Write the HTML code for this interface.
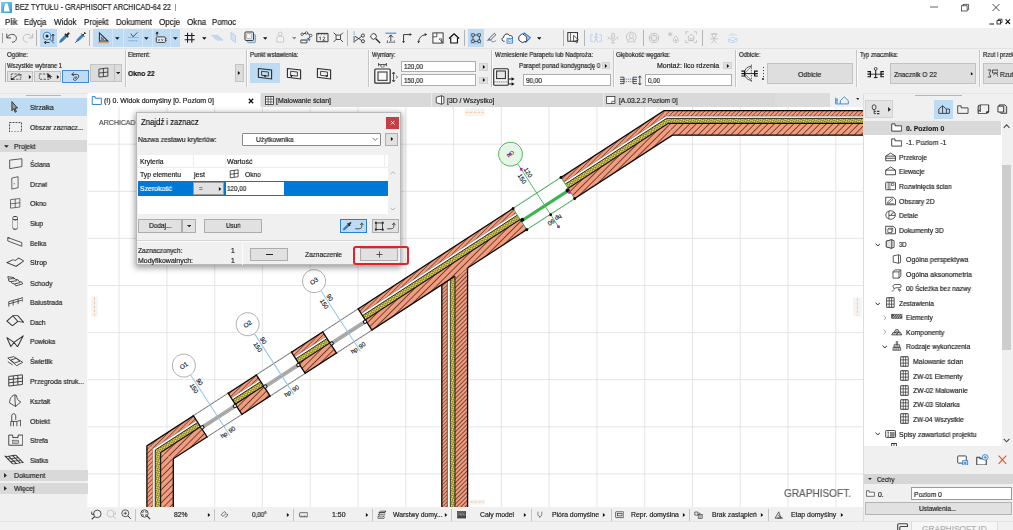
<!DOCTYPE html>
<html><head><meta charset="utf-8"><title>ARCHICAD</title>
<style>
html,body{margin:0;padding:0;}
body{-webkit-font-smoothing:antialiased;width:1013px;height:530px;overflow:hidden;position:relative;background:#f0f0f0;font-family:"Liberation Sans",sans-serif;}
.r{position:absolute;display:block;}
.t{-webkit-text-stroke:0.18px currentColor;will-change:transform;position:absolute;white-space:nowrap;transform-origin:0 50%;font-family:"Liberation Sans",sans-serif;}
</style></head><body>
<div class="r " style="left:0.0px;top:0.0px;width:1013.0px;height:27.5px;background:#ffffff;"></div>
<svg class="r" style="left:1.0px;top:1.5px;" width="11" height="11" viewBox="0 0 11 11"><defs><linearGradient id="ai" x1="0" y1="0" x2="1" y2="1"><stop offset="0" stop-color="#7fd0f2"/><stop offset="1" stop-color="#2a9bd8"/></linearGradient></defs><rect x="0" y="0" width="11" height="11" fill="url(#ai)"/><path d="M3.6 1.6 L6.6 1.6 L8.8 9.6 L2.4 9.6 Z" fill="#fff"/><path d="M3.6 1.6 L2.4 9.6 L1.8 9.6 L3.2 1.6Z" fill="#1c78b8"/></svg>
<div class="t" style="left:14.5px;top:3.32px;font-size:8.13px;line-height:9.76px;color:#1a1a1a;transform:scaleX(0.882);">BEZ TYTUŁU - GRAPHISOFT ARCHICAD-64 22</div>
<div class="r " style="left:174.5px;top:4.0px;width:0.6px;height:7.0px;background:#999;"></div>
<svg class="r" style="left:929.0px;top:3.0px;" width="10" height="8" viewBox="0 0 10 8"><path d="M1 4 H9" stroke="#222" stroke-width="0.7"/></svg>
<svg class="r" style="left:960.0px;top:2.5px;" width="10" height="9" viewBox="0 0 10 9"><rect x="1.5" y="2.8" width="5.6" height="5.2" fill="#fff" stroke="#222" stroke-width="0.7"/><path d="M3 2.8 V1.4 H8.6 V6.8 H7.2" fill="none" stroke="#222" stroke-width="0.7"/></svg>
<svg class="r" style="left:991.0px;top:2.5px;" width="10" height="9" viewBox="0 0 10 9"><path d="M1.5 1 L8.5 8 M8.5 1 L1.5 8" stroke="#222" stroke-width="0.8"/></svg>
<svg class="r" style="left:989.0px;top:17.5px;" width="24" height="8" viewBox="0 0 24 8"><path d="M0.5 6 H5" stroke="#111" stroke-width="1"/><rect x="8" y="2.6" width="3.6" height="3.4" fill="none" stroke="#111" stroke-width="0.8"/><path d="M9.4 2.6 V1.2 H13 V4.6 H11.6" fill="none" stroke="#111" stroke-width="0.8"/><path d="M16.6 1.4 L21 6 M21 1.4 L16.6 6" stroke="#111" stroke-width="1.1"/></svg>
<div class="t" style="left:4.5px;top:17.82px;font-size:8.13px;line-height:9.76px;color:#1a1a1a;transform:scaleX(0.954);">Plik</div>
<div class="t" style="left:23.5px;top:17.82px;font-size:8.13px;line-height:9.76px;color:#1a1a1a;transform:scaleX(0.922);">Edycja</div>
<div class="t" style="left:53.5px;top:17.82px;font-size:8.13px;line-height:9.76px;color:#1a1a1a;transform:scaleX(0.996);">Widok</div>
<div class="t" style="left:83.5px;top:17.82px;font-size:8.13px;line-height:9.76px;color:#1a1a1a;transform:scaleX(0.968);">Projekt</div>
<div class="t" style="left:115.5px;top:17.82px;font-size:8.13px;line-height:9.76px;color:#1a1a1a;transform:scaleX(0.972);">Dokument</div>
<div class="t" style="left:158.5px;top:17.82px;font-size:8.13px;line-height:9.76px;color:#1a1a1a;transform:scaleX(0.989);">Opcje</div>
<div class="t" style="left:186.5px;top:17.82px;font-size:8.13px;line-height:9.76px;color:#1a1a1a;transform:scaleX(0.978);">Okna</div>
<div class="t" style="left:212.0px;top:17.82px;font-size:8.13px;line-height:9.76px;color:#1a1a1a;transform:scaleX(0.949);">Pomoc</div>
<div class="r " style="left:0.0px;top:27.5px;width:1013.0px;height:65.5px;background:#f0f0f0;"></div>
<div class="r " style="left:2.1px;top:32.5px;width:0.8px;height:10.5px;background:#a0a0a0;"></div>
<svg class="r" style="left:4.5px;top:30.9px;" width="13.5" height="13.5" viewBox="0 0 16 16"><path d="M2.2 3.2 V8.2 H7.2" fill="none" stroke="#3a3a3a" stroke-width="1.05"/><path d="M2.6 7.8 C4.5 3.2 11 2.6 13 6.6 C14.6 10 12 13.6 8.4 13.2" fill="none" stroke="#3a3a3a" stroke-width="1.05"/></svg>
<svg class="r" style="left:20.5px;top:30.9px;" width="13.5" height="13.5" viewBox="0 0 16 16"><path d="M13.8 3.2 V8.2 H8.8" fill="none" stroke="#b9b9b9" stroke-width="1.05"/><path d="M13.4 7.8 C11.5 3.2 5 2.6 3 6.6 C1.4 10 4 13.6 7.6 13.2" fill="none" stroke="#b9b9b9" stroke-width="1.05"/></svg>
<div class="r " style="left:35.8px;top:30.0px;width:0.8px;height:16.0px;background:#b4b4b4;"></div>
<div class="r " style="left:40.3px;top:28.6px;width:16.6px;height:18.2px;background:#bedbf4;"></div>
<svg class="r" style="left:42.0px;top:30.9px;" width="13.5" height="13.5" viewBox="0 0 16 16"><circle cx="6" cy="6" r="4.6" fill="#dbe9f8" stroke="#2f7fd1" stroke-width="1.1"/><circle cx="6" cy="6" r="1.9" fill="#2b2b2b"/><path d="M9 9.5 L14 14.5" stroke="#2f7fd1" stroke-width="1.2"/><path d="M13 12 V4 M11.4 5.8 L13 3.6 L14.6 5.8" fill="none" stroke="#2b2b2b" stroke-width="1.1"/><path d="M9 13.6 H3 M4.8 12 L2.6 13.6 L4.8 15.2" fill="none" stroke="#2b2b2b" stroke-width="1.1"/></svg>
<svg class="r" style="left:58.0px;top:31.1px;" width="13.0" height="13.0" viewBox="0 0 16 16"><path d="M2 14 L3 11 L9.5 4.5 L11.5 6.5 L5 13 Z" fill="#2f7fd1" stroke="#1d5ea8" stroke-width="0.8"/><path d="M8.4 3.4 L12.6 7.6" stroke="#2b2b2b" stroke-width="1.6"/><path d="M10.5 5.5 L13 3" stroke="#2b2b2b" stroke-width="2.6" stroke-linecap="round"/></svg>
<svg class="r" style="left:74.0px;top:31.1px;" width="13.0" height="13.0" viewBox="0 0 16 16"><path d="M1.5 14.5 L4 12" stroke="#2b2b2b" stroke-width="1"/><path d="M3.4 12.6 L4.2 10 L10 4.2 L11.8 6 L6 11.8 Z" fill="#2f7fd1" stroke="#1d5ea8" stroke-width="0.8"/><path d="M9 3.2 L12.8 7 M11 5 L13.6 2.4 M12.4 1.2 L14.8 3.6" stroke="#2b2b2b" stroke-width="1.2"/></svg>
<div class="r " style="left:89.3px;top:30.0px;width:0.8px;height:16.0px;background:#b4b4b4;"></div>
<div class="r " style="left:93.2px;top:28.6px;width:87.0px;height:18.2px;background:#bedbf4;"></div>
<div class="r " style="left:112.3px;top:28.6px;width:0.5px;height:18.2px;background:#d3e6f7;"></div>
<div class="r " style="left:122.7px;top:28.6px;width:0.5px;height:18.2px;background:#d3e6f7;"></div>
<div class="r " style="left:141.9px;top:28.6px;width:0.5px;height:18.2px;background:#d3e6f7;"></div>
<div class="r " style="left:151.8px;top:28.6px;width:0.5px;height:18.2px;background:#d3e6f7;"></div>
<div class="r " style="left:170.4px;top:28.6px;width:0.5px;height:18.2px;background:#d3e6f7;"></div>
<svg class="r" style="left:97.4px;top:31.2px;" width="12.8" height="12.8" viewBox="0 0 16 16"><path d="M3 2.4 V12.6 H13.6 Z" fill="none" stroke="#2b2b2b" stroke-width="1.3"/><path d="M5.4 7.6 V10.4 H8.6 Z" fill="none" stroke="#2b2b2b" stroke-width="0.8"/><path d="M1.4 14.6 H14.6" stroke="#d89a5c" stroke-width="1.4"/></svg>
<svg class="r" style="left:115.1px;top:35.6px;" width="4.6" height="4.6" viewBox="0 0 4.6 4.6"><path d="M0 1.15 L4.60 1.15 L2.30 3.68Z" fill="#111"/></svg>
<svg class="r" style="left:127.0px;top:31.3px;" width="12.6" height="12.6" viewBox="0 0 16 16"><path d="M1 8.2 H15" stroke="#6d8fb8" stroke-width="1" stroke-dasharray="1.6 0.8"/><path d="M2 12.4 H14" stroke="#2f7fd1" stroke-width="0.9" stroke-dasharray="1.4 1"/><path d="M7.4 7.6 L13.2 1.8 M5 3.4 L7.6 7.2" stroke="#2b2b2b" stroke-width="1"/></svg>
<svg class="r" style="left:144.1px;top:35.6px;" width="4.6" height="4.6" viewBox="0 0 4.6 4.6"><path d="M0 1.15 L4.60 1.15 L2.30 3.68Z" fill="#111"/></svg>
<svg class="r" style="left:155.2px;top:31.0px;" width="13.2" height="13.2" viewBox="0 0 16 16"><rect x="1.6" y="7.2" width="11" height="6.6" rx="1" fill="#eef4fb" stroke="#2b2b2b" stroke-width="1.1"/><path d="M3.6 9.6 L4.8 12 L6 9.6 M7.6 9.6 L8.8 12 L10 9.6" fill="none" stroke="#2b2b2b" stroke-width="0.7"/><path d="M2.4 6 V2.2 M1 3.8 L2.4 1.8 L3.8 3.8" fill="none" stroke="#2b2b2b" stroke-width="1"/><rect x="1.6" y="1" width="2.2" height="2.2" fill="#2b2b2b"/><path d="M14 9 v0.8 M14 11.4 v0.8" stroke="#2b2b2b" stroke-width="1"/></svg>
<svg class="r" style="left:173.2px;top:35.6px;" width="4.6" height="4.6" viewBox="0 0 4.6 4.6"><path d="M0 1.15 L4.60 1.15 L2.30 3.68Z" fill="#111"/></svg>
<svg class="r" style="left:184.0px;top:31.9px;" width="11.4" height="11.4" viewBox="0 0 16 16"><path d="M5 1 V15 M11 1 V15 M1 5 H15 M1 11 H15" stroke="#1a1a1a" stroke-width="1.5"/></svg>
<svg class="r" style="left:202.1px;top:35.6px;" width="4.6" height="4.6" viewBox="0 0 4.6 4.6"><path d="M0 1.15 L4.60 1.15 L2.30 3.68Z" fill="#111"/></svg>
<svg class="r" style="left:210.6px;top:31.2px;" width="12.8" height="12.8" viewBox="0 0 16 16"><path d="M1 5.6 L8.6 5.6 L15 11.4 L7.4 11.4 Z" fill="#d5e2f3" stroke="#a9c8ec" stroke-width="0.8"/><path d="M3.6 5.6 L10 11.4 M6.2 5.6 L12.6 11.4 M4 8.4 H11.6" stroke="#a9c8ec" stroke-width="0.6"/></svg>
<svg class="r" style="left:226.6px;top:31.2px;" width="12.8" height="12.8" viewBox="0 0 16 16"><path d="M5 1.6 L10.6 5.6 L10.6 14.4 L5 10.4 Z" fill="#d5e2f3" stroke="#a9c8ec" stroke-width="0.9"/></svg>
<svg class="r" style="left:244.4px;top:31.1px;" width="13.0" height="13.0" viewBox="0 0 16 16"><rect x="4.2" y="4.4" width="10" height="10" rx="1.2" fill="#bcd3ee" stroke="#5c8fcc" stroke-width="0.9"/><rect x="1.2" y="1.2" width="10.4" height="10.4" rx="1.2" fill="#f4f4f4" stroke="#2b2b2b" stroke-width="1.2"/><rect x="3.4" y="3.4" width="6" height="6" fill="none" stroke="#8c8c8c" stroke-width="0.7"/></svg>
<svg class="r" style="left:262.7px;top:35.6px;" width="4.6" height="4.6" viewBox="0 0 4.6 4.6"><path d="M0 1.15 L4.60 1.15 L2.30 3.68Z" fill="#111"/></svg>
<svg class="r" style="left:273.6px;top:31.4px;" width="12.4" height="12.4" viewBox="0 0 16 16"><circle cx="8" cy="3.8" r="2.4" fill="#f3f3f3" stroke="#b9b9b9" stroke-width="0.9"/><path d="M3.6 14.4 V9 Q3.6 6.8 6 6.8 H10 Q12.4 6.8 12.4 9 V14.4 Z" fill="#f3f3f3" stroke="#b9b9b9" stroke-width="0.9"/></svg>
<svg class="r" style="left:291.8px;top:35.7px;" width="4.4" height="4.4" viewBox="0 0 4.4 4.4"><path d="M0 1.10 L4.40 1.10 L2.20 3.52Z" fill="#8a8a8a"/></svg>
<svg class="r" style="left:299.6px;top:31.1px;" width="13.0" height="13.0" viewBox="0 0 16 16"><path d="M2.4 4 L8 2.2 L13.4 5.6 L9.6 10.4" fill="none" stroke="#2b2b2b" stroke-width="1.1"/><circle cx="2.6" cy="4" r="1.5" fill="#fff" stroke="#2b2b2b" stroke-width="0.9"/><circle cx="8" cy="2.4" r="1.5" fill="#fff" stroke="#2b2b2b" stroke-width="0.9"/><circle cx="13.2" cy="5.6" r="1.5" fill="#fff" stroke="#2b2b2b" stroke-width="0.9"/><path d="M8 8.6 L11.6 13 L13 9.4 Z" fill="#2f7fd1"/><path d="M1 11 H8.6 V14.6 H1 Z" fill="#fff" stroke="#2b2b2b" stroke-width="1"/><path d="M3 11 v1.6 M5 11 v1.6 M7 11 v1.6" stroke="#2b2b2b" stroke-width="0.6"/></svg>
<svg class="r" style="left:315.8px;top:31.2px;" width="12.8" height="12.8" viewBox="0 0 16 16"><path d="M1 3 H15 V13.4 H1 Z" fill="#f6f6f6" stroke="#2b2b2b" stroke-width="1.2"/><path d="M3 3 v2.4 M5 3 v1.6 M7 3 v2.4 M9 3 v1.6 M11 3 v2.4 M13 3 v1.6" stroke="#2b2b2b" stroke-width="0.7"/><path d="M4.2 8 L5.4 7.4 V11.6 M8.4 8.2 Q9.8 6.8 11 8 Q11.6 9 8.4 11.6 H11.6" fill="none" stroke="#2b2b2b" stroke-width="0.9"/></svg>
<svg class="r" style="left:333.0px;top:32.3px;" width="10.6" height="10.6" viewBox="0 0 16 16"><rect x="4.6" y="4.6" width="6.8" height="6.8" fill="none" stroke="#2b2b2b" stroke-width="1.2"/><path d="M1 1 L4.6 4.6 M15 1 L11.4 4.6 M1 15 L4.6 11.4 M15 15 L11.4 11.4" stroke="#2b2b2b" stroke-width="1.3"/></svg>
<div class="r " style="left:347.1px;top:30.0px;width:0.8px;height:16.0px;background:#b4b4b4;"></div>
<svg class="r" style="left:353.0px;top:31.3px;" width="12.6" height="12.6" viewBox="0 0 16 16"><path d="M1.4 0.6 V5" stroke="#2f7fd1" stroke-width="1" stroke-dasharray="1.6 1"/><path d="M1.4 6.4 V15" stroke="#2b2b2b" stroke-width="1"/><path d="M2.4 6.6 L11 12 M2.4 13 L11 6.8" stroke="#2b2b2b" stroke-width="1.1"/><circle cx="12.6" cy="5.8" r="2" fill="none" stroke="#2b2b2b" stroke-width="1.1"/><circle cx="12.6" cy="13" r="2" fill="none" stroke="#2b2b2b" stroke-width="1.1"/></svg>
<svg class="r" style="left:369.4px;top:31.5px;" width="12.2" height="12.2" viewBox="0 0 16 16"><path d="M2 5.2 L5.4 2 L8.4 2.8 L10 6.4 L6.2 9.8 L3.4 8.4 Z" fill="#fff" stroke="#2b2b2b" stroke-width="1.2"/><path d="M8.6 8.4 L14.6 14.4" stroke="#2b2b2b" stroke-width="1.8"/></svg>
<svg class="r" style="left:385.2px;top:31.8px;" width="11.6" height="11.6" viewBox="0 0 16 16"><path d="M0.6 1.6 H15.4" stroke="#2f7fd1" stroke-width="1.4"/><path d="M8 13 V4.4 M5 7.4 L8 4 L11 7.4" fill="none" stroke="#2b2b2b" stroke-width="1.2"/><path d="M3.4 15 v-3.6 M6.4 15 v-2 M9.6 15 v-2 M12.6 15 v-3.6 M2 15.2 H14" stroke="#555" stroke-width="1.1"/></svg>
<svg class="r" style="left:400.6px;top:31.6px;" width="12.0" height="12.0" viewBox="0 0 16 16"><path d="M3.4 14 V3.4 H13.4" fill="none" stroke="#2b2b2b" stroke-width="1.2"/><path d="M11.6 1.4 L14.4 3.4 L11.6 5.4 Z" fill="#2b2b2b"/><path d="M1.6 12 L3.4 14.8 L5.2 12 Z" fill="#2b2b2b"/></svg>
<svg class="r" style="left:416.2px;top:31.5px;" width="12.2" height="12.2" viewBox="0 0 16 16"><path d="M3.4 14 C3.4 8 7 4.2 13 3.4" fill="none" stroke="#2b2b2b" stroke-width="1.2"/><path d="M11.4 1.2 L14.6 3.2 L11.6 5.4 Z" fill="#2b2b2b"/><path d="M1.6 12 L3.4 14.8 L5.2 12 Z" fill="#2b2b2b"/></svg>
<svg class="r" style="left:432.2px;top:31.6px;" width="12.0" height="12.0" viewBox="0 0 16 16"><rect x="1.2" y="1.2" width="13.6" height="13.6" fill="#f8f8f8" stroke="#2b2b2b" stroke-width="1.2"/><path d="M1.2 6.4 H6.4 V1.2" fill="none" stroke="#2b2b2b" stroke-width="1"/><path d="M9.4 9.2 H13 V12.8 M13 12.8 L9.4 9.2" fill="none" stroke="#2b2b2b" stroke-width="0.9"/><path d="M11.4 14 L13.2 11.6 L14.6 14Z" fill="#2b2b2b"/></svg>
<svg class="r" style="left:448.0px;top:31.5px;" width="12.2" height="12.2" viewBox="0 0 16 16"><path d="M1.4 8.6 L8 2.4 L14.6 8.6" fill="none" stroke="#111" stroke-width="1.7"/><path d="M3.6 8 V14.4 H12.4 V8" fill="#fff" stroke="#111" stroke-width="1.5"/></svg>
<div class="r " style="left:463.5px;top:30.0px;width:0.8px;height:16.0px;background:#b4b4b4;"></div>
<div class="r " style="left:468.0px;top:28.6px;width:16.2px;height:18.2px;background:#bedbf4;"></div>
<svg class="r" style="left:470.2px;top:31.6px;" width="12.0" height="12.0" viewBox="0 0 16 16"><rect x="4" y="4" width="8.4" height="8.4" fill="none" stroke="#2b2b2b" stroke-width="1.1"/><rect x="2.4" y="2.4" width="3.2" height="3.2" fill="#bedbf4" stroke="#2b2b2b" stroke-width="0.9"/><rect x="10.6" y="2.4" width="3.2" height="3.2" fill="#bedbf4" stroke="#2b2b2b" stroke-width="0.9"/><rect x="2.4" y="10.6" width="3.2" height="3.2" fill="#bedbf4" stroke="#2b2b2b" stroke-width="0.9"/><rect x="10.6" y="10.6" width="3.2" height="3.2" fill="#bedbf4" stroke="#2b2b2b" stroke-width="0.9"/><path d="M1 1 V15 H15" fill="none" stroke="#2f7fd1" stroke-width="0.7" stroke-dasharray="1.4 1"/></svg>
<svg class="r" style="left:486.2px;top:31.8px;" width="11.6" height="11.6" viewBox="0 0 16 16"><path d="M3.6 11.4 L4.4 8.8 L11.6 1.8 L13.6 3.8 L6.4 10.8 Z" fill="#fff" stroke="#2b2b2b" stroke-width="1.1"/><path d="M1 12.4 C3 9 6.6 9.4 7 11.6 C7.4 13.8 11 14.6 14 11.4" fill="none" stroke="#2f7fd1" stroke-width="1.2"/></svg>
<svg class="r" style="left:500.8px;top:31.1px;" width="13.0" height="13.0" viewBox="0 0 16 16"><path d="M4.4 12.6 H3.6 C0.6 12.6 0.4 8.2 3.4 7.8 C3.2 3.6 8.6 2 10.4 5.6 C13.6 5 15 8.2 13.6 10" fill="#fff" stroke="#2b2b2b" stroke-width="1.2"/><rect x="7.4" y="9" width="6.8" height="6" fill="#dbe9f8" stroke="#2f7fd1" stroke-width="1"/><rect x="9.2" y="10.8" width="3.2" height="2.4" fill="#fff" stroke="#2f7fd1" stroke-width="0.6"/></svg>
<svg class="r" style="left:518.0px;top:30.9px;" width="13.4" height="13.4" viewBox="0 0 16 16"><path d="M7.6 2.4 L14.6 8 L9.4 13.4 L2.6 8 Z" fill="#cfe1f5" stroke="#2f7fd1" stroke-width="1.3"/><path d="M1 6.6 L5.2 3.2 L10.4 7 L10.4 12 L5.2 13.8 L1 11 Z" fill="#fff" stroke="#2b2b2b" stroke-width="1.1"/></svg>
<svg class="r" style="left:536.5px;top:35.6px;" width="4.6" height="4.6" viewBox="0 0 4.6 4.6"><path d="M0 1.15 L4.60 1.15 L2.30 3.68Z" fill="#111"/></svg>
<div class="r " style="left:563.1px;top:30.0px;width:0.8px;height:16.0px;background:#b4b4b4;"></div>
<svg class="r" style="left:567.0px;top:31.3px;" width="12.6" height="12.6" viewBox="0 0 16 16"><rect x="1" y="2" width="12.4" height="11" fill="#f8f8f8" stroke="#2b2b2b" stroke-width="1.2"/><path d="M4.4 2 V13" stroke="#2b2b2b" stroke-width="0.9"/><path d="M8.4 5.4 L8.4 14 L10.4 12 L12 15.2 L13.2 14.6 L11.8 11.6 L14.4 11.4 Z" fill="#fff" stroke="#111" stroke-width="0.9"/></svg>
<div class="r " style="left:584.1px;top:30.0px;width:0.8px;height:16.0px;background:#b4b4b4;"></div>
<svg class="r" style="left:590.0px;top:31.5px;" width="12.2" height="12.2" viewBox="0 0 16 16"><path d="M1 3.8 H4 M1 3.8 V12.4 H4 M15 3.8 H12 M15 3.8 V12.4 H12" fill="none" stroke="#a9c8ec" stroke-width="0.9"/><circle cx="8.4" cy="2.6" r="1.4" fill="#a9c8ec"/><path d="M8.2 4.4 L7.8 9 L5.4 14 M7.8 9 L10.8 14 M5.2 7.4 L8 5.6 L11 8" fill="none" stroke="#a9c8ec" stroke-width="1.1"/></svg>
<svg class="r" style="left:607.4px;top:31.6px;" width="12.0" height="12.0" viewBox="0 0 16 16"><rect x="6" y="1.4" width="4" height="8" rx="2" fill="#e4e4e4" stroke="#b9b9b9" stroke-width="0.9"/><path d="M3.8 7.4 C3.8 12.4 12.2 12.4 12.2 7.4 M8 11.4 V14.6 M5.4 14.6 H10.6 M1 6 L2.6 8 L1 10 M15 6 L13.4 8 L15 10" fill="none" stroke="#b9b9b9" stroke-width="0.9"/></svg>
<svg class="r" style="left:625.4px;top:31.3px;" width="12.6" height="12.6" viewBox="0 0 16 16"><circle cx="8" cy="7.6" r="6.2" fill="none" stroke="#b9b9b9" stroke-width="1"/><circle cx="8" cy="6.4" r="2.6" fill="none" stroke="#b9b9b9" stroke-width="0.9"/><path d="M4 12 C5 8.8 11 8.8 12 12 M2.2 13.4 L4.6 14.8 M13.8 13.4 L11.4 14.8" fill="none" stroke="#b9b9b9" stroke-width="0.9"/></svg>
<div class="r " style="left:642.6px;top:30.0px;width:0.8px;height:16.0px;background:#b4b4b4;"></div>
<svg class="r" style="left:648.4px;top:31.6px;" width="12.0" height="12.0" viewBox="0 0 16 16"><circle cx="8" cy="8" r="6.4" fill="#ececec" stroke="#b9b9b9" stroke-width="1"/><path d="M8 1.6 V14.4 M1.6 8 H14.4" stroke="#b9b9b9" stroke-width="0.9"/><rect x="4.8" y="4.8" width="6.4" height="6.4" rx="1.6" fill="#ececec" stroke="#b9b9b9" stroke-width="0.9"/></svg>
<svg class="r" style="left:666.6px;top:31.2px;" width="12.8" height="12.8" viewBox="0 0 16 16"><path d="M4 1 V7 M1 4 H7 M2 2 L6 6 M6 2 L2 6" stroke="#b9b9b9" stroke-width="0.8"/><path d="M11 6 C8.4 8.6 7.6 11 8.4 12.8 C9.4 15 12.6 15 13.6 12.8 C14.4 11 13.6 8.6 11 6 Z" fill="#f4f4f4" stroke="#b9b9b9" stroke-width="1"/><circle cx="11" cy="11.6" r="1.2" fill="#b9b9b9"/></svg>
<svg class="r" style="left:684.8px;top:31.4px;" width="12.4" height="12.4" viewBox="0 0 16 16"><path d="M1 4.4 V1 H4.4 M11.6 1 H15 V4.4 M15 11.6 V15 H11.6 M4.4 15 H1 V11.6" fill="none" stroke="#b9b9b9" stroke-width="1"/><path d="M3.4 8.4 L8 4 L12.6 8.4 M4.8 7.6 V12.6 H11.2 V7.6" fill="none" stroke="#b9b9b9" stroke-width="1"/><rect x="6.8" y="9.4" width="2.4" height="3.2" fill="none" stroke="#b9b9b9" stroke-width="0.7"/></svg>
<div class="r " style="left:702.0px;top:30.0px;width:0.8px;height:16.0px;background:#b4b4b4;"></div>
<svg class="r" style="left:708.0px;top:31.5px;" width="12.2" height="12.2" viewBox="0 0 16 16"><circle cx="8" cy="4.6" r="2.6" fill="none" stroke="#b9b9b9" stroke-width="1"/><path d="M3.4 2.6 H12.6 M8 7.2 V11 M2.6 9 H13.4 M8 11 L4.4 15 M8 11 L11.6 15" fill="none" stroke="#b9b9b9" stroke-width="1"/></svg>
<svg class="r" style="left:726.8px;top:31.8px;" width="11.6" height="11.6" viewBox="0 0 16 16"><path d="M2.4 5 C4 1.4 12 1.4 13.6 5 M4.6 5.4 C5.6 3.4 10.4 3.4 11.4 5.4" fill="none" stroke="#a9c8ec" stroke-width="0.9" stroke-dasharray="1.4 0.9"/><path d="M2 10.4 L7 7.4 L13.8 9.2 L13.8 12.4 L8.6 15 L2 13 Z M2 10.4 L8.6 12.2 L13.8 9.2 M8.6 12.2 V15" fill="#f4f7fb" stroke="#a9c8ec" stroke-width="0.9"/></svg>
<div class="r " style="left:0.0px;top:48.0px;width:1013.0px;height:0.6px;background:#e2e2e2;"></div>
<div class="t" style="left:6.7px;top:50.91px;font-size:6.31px;line-height:7.57px;color:#222;transform:scaleX(0.959);">Ogólne:</div>
<div class="r " style="left:4.7px;top:62.5px;width:0.7px;height:19.0px;background:#a8a8a8;"></div>
<div class="t" style="left:6.7px;top:62.36px;font-size:6.74px;line-height:8.09px;color:#222;transform:scaleX(0.869);">Wszystkie wybrane 1</div>
<div class="r " style="left:7.4px;top:70.8px;width:25.2px;height:11.6px;background:#e3e3e3;border:0.7px solid #c0c0c0;box-sizing:border-box;"></div>
<svg class="r" style="left:10.0px;top:71.8px" width="14.0" height="9.4" viewBox="0 0 16 16" preserveAspectRatio="none"><rect x="1.4" y="3.4" width="11" height="9" fill="none" stroke="#2b2b2b" stroke-width="1" stroke-dasharray="2.4 1.4"/><path d="M3 11 L9 5 H13" fill="none" stroke="#2b2b2b" stroke-width="1.1"/><rect x="1" y="10.4" width="3" height="3.2" fill="#2b2b2b"/></svg>
<svg class="r" style="left:28.0px;top:74.7px;" width="4.0" height="4.0" viewBox="0 0 4.0 4.0"><path d="M0.90 0 L3.20 2.00 L0.90 4.00Z" fill="#111"/></svg>
<div class="r " style="left:34.0px;top:70.8px;width:27.0px;height:11.6px;background:#e3e3e3;border:0.7px solid #c0c0c0;box-sizing:border-box;"></div>
<svg class="r" style="left:38.0px;top:71.8px" width="15.0" height="9.4" viewBox="0 0 16 16" preserveAspectRatio="none"><rect x="1.4" y="3.4" width="10.4" height="9" fill="none" stroke="#2b2b2b" stroke-width="1" stroke-dasharray="2.4 1.4"/><path d="M10 2 L10 10.4 L12 8.6 L13.4 11.6 L14.4 11 L13 8.2 L15.4 8 Z" fill="#2b2b2b"/></svg>
<svg class="r" style="left:55.6px;top:74.7px;" width="4.0" height="4.0" viewBox="0 0 4.0 4.0"><path d="M0.90 0 L3.20 2.00 L0.90 4.00Z" fill="#111"/></svg>
<div class="r " style="left:62.2px;top:70.4px;width:26.6px;height:12.4px;background:#bedbf4;border:0.7px solid #3c8ad8;box-sizing:border-box;"></div>
<svg class="r" style="left:69.6px;top:71.2px" width="12.0" height="11.0" viewBox="0 0 16 16" preserveAspectRatio="none"><path d="M5.4 2.2 L2.2 5 L5.6 7.4" fill="none" stroke="#2b2b2b" stroke-width="1.1"/><path d="M2.6 5 H8.4 C11 5 12.4 6.6 11.4 8.8 L8.6 12.6 C7 14.8 3.8 13.4 5 11 L7.4 8.4 C8 7.6 9.2 8.4 8.6 9.2 L7 11.4" fill="none" stroke="#2b2b2b" stroke-width="1.1"/></svg>
<div class="r " style="left:90.0px;top:63.8px;width:31.7px;height:18.6px;background:#dcdcdc;border:0.7px solid #c4c4c4;box-sizing:border-box;"></div>
<div class="r " style="left:114.2px;top:64.4px;width:0.6px;height:17.4px;background:#c2c2c2;"></div>
<svg class="r" style="left:97.8px;top:67.4px" width="10.8" height="11.0" viewBox="0 0 16 16" preserveAspectRatio="none"><path d="M1.4 3 L14.6 1.4 V13.4 L1.4 14.6 Z M8 2.2 V14 M1.4 8.8 L14.6 7.4" fill="none" stroke="#2b2b2b" stroke-width="1.2"/></svg>
<svg class="r" style="left:115.9px;top:71.3px;" width="4.2" height="4.2" viewBox="0 0 4.2 4.2"><path d="M0 1.05 L4.20 1.05 L2.10 3.36Z" fill="#222"/></svg>
<div class="r " style="left:125.0px;top:49.5px;width:0.8px;height:37.5px;background:#c6c6c6;"></div>
<div class="r " style="left:125.8px;top:49.5px;width:0.6px;height:37.5px;background:#fbfbfb;"></div>
<div class="t" style="left:128.3px;top:50.91px;font-size:6.31px;line-height:7.57px;color:#222;transform:scaleX(0.892);">Element:</div>
<div class="t" style="left:128.3px;top:69.38px;font-size:7.7px;line-height:9.24px;color:#111;font-weight:bold;transform:scaleX(0.879);">Okno 22</div>
<div class="r " style="left:234.5px;top:63.8px;width:9.3px;height:18.6px;background:#dcdcdc;border:0.7px solid #c4c4c4;box-sizing:border-box;"></div>
<svg class="r" style="left:237.4px;top:71.2px;" width="4.0" height="4.0" viewBox="0 0 4.0 4.0"><path d="M0.90 0 L3.20 2.00 L0.90 4.00Z" fill="#111"/></svg>
<div class="r " style="left:246.4px;top:49.5px;width:0.8px;height:37.5px;background:#c6c6c6;"></div>
<div class="r " style="left:247.2px;top:49.5px;width:0.6px;height:37.5px;background:#fbfbfb;"></div>
<div class="t" style="left:250.4px;top:50.91px;font-size:6.31px;line-height:7.57px;color:#222;transform:scaleX(0.958);">Punkt wstawienia:</div>
<div class="r " style="left:250.4px;top:63.0px;width:29.2px;height:19.8px;background:#bedbf4;"></div>
<svg class="r" style="left:257.2px;top:66.6px" width="16.0" height="13.0" viewBox="0 0 16 14" preserveAspectRatio="none"><path d="M1.4 1.6 L14.6 3.2 V12.8 L1.4 11 Z" fill="none" stroke="#2b2b2b" stroke-width="1.1"/><path d="M4.6 4.6 L11.4 5.4 V9.8 L4.6 9 Z" fill="none" stroke="#2b2b2b" stroke-width="0.9"/><path d="M6.6 9 L8 11.4 L9.4 9.2 Z" fill="#111"/></svg>
<svg class="r" style="left:286.4px;top:66.6px" width="16.0" height="13.0" viewBox="0 0 16 14" preserveAspectRatio="none"><path d="M1.4 1.6 L14.6 3.2 V12.8 L1.4 11 Z" fill="none" stroke="#2b2b2b" stroke-width="1.1"/><path d="M4.6 4.6 L11.4 5.4 V9.8 L4.6 9 Z" fill="none" stroke="#2b2b2b" stroke-width="0.9"/><path d="M4.0 9 L5.4 11.4 L6.800000000000001 9.2 Z" fill="#111"/></svg>
<svg class="r" style="left:315.5px;top:66.6px" width="16.0" height="13.0" viewBox="0 0 16 14" preserveAspectRatio="none"><path d="M1.4 1.6 L14.6 3.2 V12.8 L1.4 11 Z" fill="none" stroke="#2b2b2b" stroke-width="1.1"/><path d="M4.6 4.6 L11.4 5.4 V9.8 L4.6 9 Z" fill="none" stroke="#2b2b2b" stroke-width="0.9"/><path d="M9.4 9 L10.8 11.4 L12.200000000000001 9.2 Z" fill="#111"/></svg>
<div class="r " style="left:368.1px;top:49.5px;width:0.8px;height:37.5px;background:#c6c6c6;"></div>
<div class="r " style="left:368.9px;top:49.5px;width:0.6px;height:37.5px;background:#fbfbfb;"></div>
<div class="t" style="left:372.2px;top:50.91px;font-size:6.31px;line-height:7.57px;color:#222;transform:scaleX(0.892);">Wymiary:</div>
<svg class="r" style="left:373.8px;top:62.2px" width="24.4" height="22.0" viewBox="0 0 24.4 22" preserveAspectRatio="none"><path d="M4.6 2.6 H12.4 M4.6 1 V4.2 M12.4 1 V4.2" stroke="#2b2b2b" stroke-width="0.8"/><ellipse cx="8.5" cy="3.9" rx="2" ry="1.2" fill="#fff" stroke="#2b2b2b" stroke-width="0.6"/><rect x="0.8" y="7" width="15.4" height="14.2" rx="1" fill="#f7f7f7" stroke="#2b2b2b" stroke-width="1.2"/><rect x="4" y="10" width="9" height="8.4" fill="#fafafa" stroke="#555" stroke-width="1.3"/><path d="M19.6 10.4 V19.6 M18.2 12 L19.6 10 L21 12 M18.2 18 L19.6 20 L21 18" fill="none" stroke="#2b2b2b" stroke-width="0.8"/><path d="M22 13.6 l1.6 1.4 l-1.6 1.4" fill="none" stroke="#2b2b2b" stroke-width="0.7"/></svg>
<div class="r " style="left:401.0px;top:60.6px;width:74.9px;height:11.6px;background:#fff;border:0.8px solid #adadad;box-sizing:border-box;"></div>
<div class="r " style="left:401.0px;top:74.2px;width:74.9px;height:11.6px;background:#fff;border:0.8px solid #adadad;box-sizing:border-box;"></div>
<div class="t" style="left:404.3px;top:63.29px;font-size:6.85px;line-height:8.22px;color:#222;transform:scaleX(0.907);">120,00</div>
<div class="t" style="left:404.3px;top:76.79px;font-size:6.85px;line-height:8.22px;color:#222;transform:scaleX(0.907);">150,00</div>
<div class="r " style="left:479.0px;top:63.0px;width:9.2px;height:7.5px;background:#e0e0e0;border:0.7px solid #d2d2d2;box-sizing:border-box;"></div>
<svg class="r" style="left:481.8px;top:64.8px;" width="4.0" height="4.0" viewBox="0 0 4.0 4.0"><path d="M0.90 0 L3.20 2.00 L0.90 4.00Z" fill="#111"/></svg>
<div class="r " style="left:479.0px;top:76.6px;width:9.2px;height:7.4px;background:#e0e0e0;border:0.7px solid #d2d2d2;box-sizing:border-box;"></div>
<svg class="r" style="left:481.8px;top:78.3px;" width="4.0" height="4.0" viewBox="0 0 4.0 4.0"><path d="M0.90 0 L3.20 2.00 L0.90 4.00Z" fill="#111"/></svg>
<div class="r " style="left:491.2px;top:49.5px;width:0.8px;height:37.5px;background:#c6c6c6;"></div>
<div class="r " style="left:492.0px;top:49.5px;width:0.6px;height:37.5px;background:#fbfbfb;"></div>
<div class="t" style="left:494.7px;top:50.91px;font-size:6.31px;line-height:7.57px;color:#222;transform:scaleX(0.959);">Wzniesienie Parapetu lub Nadproża:</div>
<div class="t" style="left:518.9px;top:61.82px;font-size:6.63px;line-height:7.96px;color:#222;transform:scaleX(0.924);">Parapet ponad kondygnację 0</div>
<div class="r " style="left:601.6px;top:61.8px;width:8.1px;height:7.4px;background:#e0e0e0;border:0.7px solid #d2d2d2;box-sizing:border-box;"></div>
<svg class="r" style="left:603.9px;top:63.5px;" width="4.0" height="4.0" viewBox="0 0 4.0 4.0"><path d="M0.90 0 L3.20 2.00 L0.90 4.00Z" fill="#111"/></svg>
<svg class="r" style="left:493.4px;top:68.0px" width="22.0" height="18.4" viewBox="0 0 22 18.4" preserveAspectRatio="none"><rect x="0.7" y="0.7" width="14.6" height="16.6" rx="1" fill="#f5f5f5" stroke="#2b2b2b" stroke-width="1.1"/><rect x="3.6" y="3" width="8.8" height="7.6" fill="#e6e6e6" stroke="#2b2b2b" stroke-width="1"/><path d="M0.7 14 H15.3" stroke="#2b2b2b" stroke-width="0.7" stroke-dasharray="1 0.8"/><path d="M15.6 11 H19.4 M15.6 16 H19.4" stroke="#111" stroke-width="0.9"/><path d="M18.6 9.2 L21.6 11 L18.6 12.8 Z M18.6 14.2 L21.6 16 L18.6 17.8 Z" fill="#111"/></svg>
<div class="r " style="left:523.3px;top:74.2px;width:87.4px;height:11.6px;background:#fff;border:0.8px solid #adadad;box-sizing:border-box;"></div>
<div class="t" style="left:526.3px;top:76.79px;font-size:6.85px;line-height:8.22px;color:#222;transform:scaleX(0.933);">90,00</div>
<div class="r " style="left:613.0px;top:49.5px;width:0.8px;height:37.5px;background:#c6c6c6;"></div>
<div class="r " style="left:613.8px;top:49.5px;width:0.6px;height:37.5px;background:#fbfbfb;"></div>
<div class="t" style="left:616.4px;top:50.91px;font-size:6.31px;line-height:7.57px;color:#222;transform:scaleX(0.950);">Głębokość węgarka:</div>
<div class="t" style="left:656.6px;top:61.76px;font-size:6.74px;line-height:8.09px;color:#222;transform:scaleX(1.039);">Montaż: lico rdzenia</div>
<div class="r " style="left:723.0px;top:61.8px;width:8.7px;height:7.4px;background:#e0e0e0;border:0.7px solid #d2d2d2;box-sizing:border-box;"></div>
<svg class="r" style="left:725.6px;top:63.5px;" width="4.0" height="4.0" viewBox="0 0 4.0 4.0"><path d="M0.90 0 L3.20 2.00 L0.90 4.00Z" fill="#111"/></svg>
<svg class="r" style="left:618.8px;top:74.6px" width="23.6" height="10.8" viewBox="0 0 23.6 10.8" preserveAspectRatio="none"><path d="M1 2.2 H5 V8.6 H1 M1 4.4 H5 M1 6.4 H5 M18 2.2 H14 V8.6 H18 M14 4.4 H18 M14 6.4 H18" fill="none" stroke="#2b2b2b" stroke-width="0.8"/><path d="M5 4.2 H14 M5 6.6 H14" stroke="#4d6f9c" stroke-width="0.8" stroke-dasharray="1.2 0.8"/><path d="M20.8 1 V10 M19.4 2.6 L20.8 0.8 L22.2 2.6 M19.4 8.2 L20.8 10 L22.2 8.2" fill="none" stroke="#2b2b2b" stroke-width="0.8"/></svg>
<div class="r " style="left:645.3px;top:74.2px;width:87.1px;height:11.6px;background:#fff;border:0.8px solid #adadad;box-sizing:border-box;"></div>
<div class="t" style="left:648.0px;top:76.79px;font-size:6.85px;line-height:8.22px;color:#222;transform:scaleX(0.900);">0,00</div>
<div class="r " style="left:735.3px;top:49.5px;width:0.8px;height:37.5px;background:#c6c6c6;"></div>
<div class="r " style="left:736.1px;top:49.5px;width:0.6px;height:37.5px;background:#fbfbfb;"></div>
<div class="t" style="left:738.5px;top:50.91px;font-size:6.31px;line-height:7.57px;color:#222;transform:scaleX(0.929);">Odbicie:</div>
<svg class="r" style="left:741.2px;top:64.0px" width="17.4" height="18.4" viewBox="0 0 17.4 18.4" preserveAspectRatio="none"><path d="M10.4 0.6 V17.8" stroke="#2b2b2b" stroke-width="0.7" stroke-dasharray="1.6 1"/><path d="M10.4 2.2 C5.4 2.6 3.2 6.4 3.4 9.6 C3.6 13 6.4 16 10.4 16.4" fill="none" stroke="#2b2b2b" stroke-width="0.8"/><path d="M3.6 9.6 L10.4 2.4 M3.6 9.6 L10.4 16.2" stroke="#2b2b2b" stroke-width="0.5"/><path d="M0.4 7.2 H3.6 V12 H0.4 M0.4 9.6 H3.6 M16.8 7.2 H13.6 V12 H16.8 M13.6 9.6 H16.8" fill="none" stroke="#111" stroke-width="1.15"/><path d="M3.6 9.6 H13.6" stroke="#111" stroke-width="0.9"/></svg>
<div class="r " style="left:762.5px;top:67.0px;width:0.9px;height:1.2px;background:#333;"></div>
<div class="r " style="left:762.5px;top:70.0px;width:0.9px;height:1.2px;background:#333;"></div>
<div class="r " style="left:762.5px;top:73.0px;width:0.9px;height:1.2px;background:#333;"></div>
<div class="r " style="left:762.5px;top:76.0px;width:0.9px;height:1.2px;background:#333;"></div>
<div class="r" style="left:761.9px;top:78.2px;width:2.2px;height:2.2px;border-radius:50%;background:#222"></div>
<div class="r " style="left:766.7px;top:63.0px;width:86.0px;height:20.8px;background:#dedede;border:0.7px solid #c2c2c2;box-sizing:border-box;"></div>
<div class="t" style="left:798.0px;top:70.60px;font-size:7.17px;line-height:8.60px;color:#222;transform:scaleX(0.963);">Odbicie</div>
<div class="r " style="left:856.1px;top:49.5px;width:0.8px;height:37.5px;background:#c6c6c6;"></div>
<div class="r " style="left:856.9px;top:49.5px;width:0.6px;height:37.5px;background:#fbfbfb;"></div>
<div class="t" style="left:860.1px;top:50.91px;font-size:6.31px;line-height:7.57px;color:#222;transform:scaleX(0.908);">Typ znacznika:</div>
<svg class="r" style="left:866.6px;top:67.2px" width="17.4" height="11.8" viewBox="0 0 17.4 11.8" preserveAspectRatio="none"><circle cx="8.7" cy="1.9" r="1.4" fill="#fff" stroke="#111" stroke-width="0.8"/><path d="M8.7 3.4 V10.4 M6.9 10.6 H10.5" stroke="#111" stroke-width="1"/><path d="M0.5 4.6 H3.4 V9.8 H0.5 M0.5 7.2 H3.4 M16.9 4.6 H14 V9.8 H16.9 M14 7.2 H16.9" fill="none" stroke="#111" stroke-width="1.15"/><path d="M3.4 7.2 H14" stroke="#111" stroke-width="0.8"/></svg>
<div class="r " style="left:890.0px;top:63.0px;width:86.2px;height:20.8px;background:#dedede;border:0.7px solid #c2c2c2;box-sizing:border-box;"></div>
<div class="t" style="left:893.9px;top:70.60px;font-size:7.17px;line-height:8.60px;color:#222;transform:scaleX(0.926);">Znacznik O 22</div>
<svg class="r" style="left:970.1px;top:71.7px;" width="3.8" height="3.8" viewBox="0 0 3.8 3.8"><path d="M0.85 0 L3.04 1.90 L0.85 3.80Z" fill="#111"/></svg>
<div class="r " style="left:979.4px;top:49.5px;width:0.8px;height:37.5px;background:#c6c6c6;"></div>
<div class="r " style="left:980.2px;top:49.5px;width:0.6px;height:37.5px;background:#fbfbfb;"></div>
<div class="t" style="left:982.6px;top:50.91px;font-size:6.31px;line-height:7.57px;color:#222;transform:scaleX(0.951);">Rzut i przekrój:</div>
<div class="r " style="left:983.0px;top:63.0px;width:37.0px;height:20.8px;background:#dedede;border:0.7px solid #c2c2c2;box-sizing:border-box;"></div>
<svg class="r" style="left:986.7px;top:69.0px" width="11.8" height="9.0" viewBox="0 0 15 9" preserveAspectRatio="none"><path d="M1 1 H5 L3 4.4 L5 8 H1 M7 1 H14 V4 H7 Z M8 6 L11 4 L14 6 V8" fill="none" stroke="#2b2b2b" stroke-width="0.9"/></svg>
<div class="t" style="left:1000.3px;top:70.60px;font-size:7.17px;line-height:8.60px;color:#222;transform:scaleX(0.909);">Rzut</div>
<div class="r " style="left:0.0px;top:92.6px;width:1013.0px;height:1.0px;background:#e6e6e6;"></div>
<div class="r " style="left:87.6px;top:93.4px;width:776.4px;height:13.6px;background:#d9d9d9;"></div>
<div class="r " style="left:88.0px;top:93.4px;width:172.0px;height:13.8px;background:#ffffff;"></div>
<div class="r " style="left:259.7px;top:93.4px;width:0.7px;height:13.6px;background:#ececec;"></div>
<div class="r " style="left:431.2px;top:93.4px;width:0.7px;height:13.6px;background:#ececec;"></div>
<div class="r " style="left:602.7px;top:93.4px;width:0.7px;height:13.6px;background:#ececec;"></div>
<div class="r " style="left:774.7px;top:93.4px;width:0.7px;height:13.6px;background:#ececec;"></div>
<div class="r " style="left:775.3px;top:93.4px;width:55.0px;height:13.6px;background:#dcdcdc;"></div>
<div class="r " style="left:830.0px;top:93.4px;width:34.0px;height:13.6px;background:#f0f0f0;"></div>
<svg class="r" style="left:90.6px;top:94.6px" width="11.6" height="10.4" viewBox="0 0 16 16"><path d="M1 2.4 H5.4 V5 H15 V14.6 H1 Z" fill="#fff" stroke="#2f7fd1" stroke-width="1.5"/></svg>
<div class="t" style="left:104.0px;top:97.36px;font-size:6.74px;line-height:8.09px;color:#222;transform:scaleX(1.038);">(!) 0. Widok domyślny [0. Poziom 0]</div>
<svg class="r" style="left:248.4px;top:97.6px" width="6.0" height="6.0" viewBox="0 0 10 10"><path d="M1.4 1.4 L8.6 8.6 M8.6 1.4 L1.4 8.6" stroke="#111" stroke-width="2.2"/></svg>
<svg class="r" style="left:264.6px;top:95.6px" width="9.0" height="9.0" viewBox="0 0 16 16"><rect x="1" y="1" width="14" height="14" fill="#fff" stroke="#2b2b2b" stroke-width="1.4"/><path d="M1 5.6 H15 M1 10.4 H15 M5.6 1 V15 M10.4 1 V15" stroke="#2b2b2b" stroke-width="1.1"/></svg>
<div class="t" style="left:275.5px;top:97.36px;font-size:6.74px;line-height:8.09px;color:#222;transform:scaleX(1.027);">[Malowanie ścian]</div>
<svg class="r" style="left:435.2px;top:95.2px" width="10.0" height="10.0" viewBox="0 0 16 16"><path d="M2 3.6 L10.4 1.2 L14.2 2.6 V13 L10.4 14.8 L2 12.4 Z M10.4 1.2 V14.8" fill="#fff" stroke="#2b2b2b" stroke-width="1.3"/></svg>
<div class="t" style="left:447.0px;top:97.36px;font-size:6.74px;line-height:8.09px;color:#222;transform:scaleX(1.015);">[3D / Wszystko]</div>
<svg class="r" style="left:606.4px;top:96.2px" width="9.6" height="8.0" viewBox="0 0 16 13.6"><rect x="1" y="1" width="14" height="11.6" fill="#fff" stroke="#2b2b2b" stroke-width="1.3"/><path d="M9.6 12.6 V9 H15" fill="none" stroke="#2b2b2b" stroke-width="1.1"/></svg>
<div class="t" style="left:618.5px;top:97.36px;font-size:6.74px;line-height:8.09px;color:#222;transform:scaleX(0.995);">[A.03.2.2 Poziom 0]</div>
<svg class="r" style="left:833.4px;top:95.4px" width="18.0" height="10.0" viewBox="0 0 18.4 13"><path d="M1 3.4 V11.6 H17.4 V7.4 L12.2 2.4 L7 7.4 V11.6 M1 5.4 H4 M1 7.4 H4 M1 9.4 H4" fill="none" stroke="#3a86d6" stroke-width="1.2"/></svg>
<svg class="r" style="left:855.7px;top:97.1px;" width="3.8" height="3.8" viewBox="0 0 3.8 3.8"><path d="M0 0.95 L3.80 0.95 L1.90 3.04Z" fill="#333"/></svg>
<div class="r " style="left:0.0px;top:93.6px;width:87.4px;height:437.0px;background:#f0f0f0;"></div>
<div class="r " style="left:87.4px;top:93.6px;width:0.8px;height:414.0px;background:#fafafa;"></div>
<div class="r " style="left:26.0px;top:95.1px;width:35.0px;height:0.8px;background:#b5b5b5;"></div>
<div class="r " style="left:0.0px;top:98.1px;width:87.2px;height:18.2px;background:#bedbf4;"></div>
<svg class="r" style="left:11.3px;top:101.0px" width="7.3" height="12.0" viewBox="0 0 11.6 16" preserveAspectRatio="none"><path d="M1.4 0.8 V13 L4.4 10.2 L6.6 15 L8.6 14 L6.4 9.6 L10.4 9.4 Z" fill="#9a9a9a" stroke="#222" stroke-width="1.2" stroke-linejoin="round"/></svg>
<div class="t" style="left:29.9px;top:104.30px;font-size:7.17px;line-height:8.60px;color:#222;transform:scaleX(0.923);">Strzałka</div>
<svg class="r" style="left:8.9px;top:121.8px" width="13.0" height="10.6" viewBox="0 0 20 16" preserveAspectRatio="none"><rect x="0.8" y="0.8" width="18.4" height="14.4" fill="none" stroke="#333333" stroke-width="1.3" stroke-dasharray="3 1.6"/></svg>
<div class="t" style="left:29.9px;top:124.20px;font-size:7.17px;line-height:8.60px;color:#222;transform:scaleX(0.931);">Obszar zaznacz...</div>
<div class="r " style="left:0.0px;top:140.0px;width:87.4px;height:12.0px;background:#d9d9d9;"></div>
<svg class="r" style="left:3.8px;top:143.5px;" width="4.8" height="4.8" viewBox="0 0 4.8 4.8"><path d="M0 1.20 L4.80 1.20 L2.40 3.84Z" fill="#222"/></svg>
<div class="t" style="left:14.0px;top:142.80px;font-size:7.17px;line-height:8.60px;color:#222;transform:scaleX(0.964);">Projekt</div>
<svg class="r" style="left:9.0px;top:157.6px" width="13.6" height="11.4" viewBox="0 0 20 16" preserveAspectRatio="none"><path d="M1 3 L19 1 V12 L1 15 Z" fill="none" stroke="#333333" stroke-width="1.15" stroke-linejoin="round"/></svg>
<div class="t" style="left:29.9px;top:160.90px;font-size:7.17px;line-height:8.60px;color:#222;transform:scaleX(0.908);">Ściana</div>
<svg class="r" style="left:11.3px;top:176.0px" width="7.9" height="13.8" viewBox="0 0 20 16" preserveAspectRatio="none"><path d="M2 2.4 L18 0.8 V13.6 L2 15.2 Z" fill="none" stroke="#333333" stroke-width="1.15" stroke-linejoin="round"/><path d="M8 8 v1.6" stroke="#333333" stroke-width="1.6"/></svg>
<div class="t" style="left:29.9px;top:180.80px;font-size:7.17px;line-height:8.60px;color:#222;transform:scaleX(0.954);">Drzwi</div>
<svg class="r" style="left:10.2px;top:197.9px" width="10.4" height="10.7" viewBox="0 0 20 16" preserveAspectRatio="none"><path d="M1 2.4 L19 0.8 V13.6 L1 15.2 Z M10 1.6 V14.4 M1 8.8 L19 7.2" fill="none" stroke="#333333" stroke-width="1.15" stroke-linejoin="round"/></svg>
<div class="t" style="left:29.9px;top:200.00px;font-size:7.17px;line-height:8.60px;color:#222;transform:scaleX(0.963);">Okno</div>
<svg class="r" style="left:11.9px;top:215.9px" width="6.5" height="14.1" viewBox="0 0 20 16" preserveAspectRatio="none"><path d="M2 2.6 V12.4 C2 16 18 16 18 12.4 V2.6 M2 2.6 C2 0 18 0 18 2.6 C18 5 2 5 2 2.6" fill="none" stroke="#333333" stroke-width="1.15" stroke-linejoin="round" stroke-width="1.6"/></svg>
<div class="t" style="left:29.9px;top:220.10px;font-size:7.17px;line-height:8.60px;color:#222;transform:scaleX(0.927);">Słup</div>
<svg class="r" style="left:7.0px;top:237.0px" width="15.6" height="9.9" viewBox="0 0 20 16" preserveAspectRatio="none"><path d="M1 1 L19 9 V15 L1 6.4 Z M1 1 L3.4 1.4" fill="none" stroke="#333333" stroke-width="1.15" stroke-linejoin="round"/></svg>
<div class="t" style="left:29.9px;top:239.90px;font-size:7.17px;line-height:8.60px;color:#222;transform:scaleX(0.903);">Belka</div>
<svg class="r" style="left:5.7px;top:257.0px" width="18.3" height="10.0" viewBox="0 0 20 16" preserveAspectRatio="none"><path d="M1 9 L7.4 4.4 L10.4 5.4 L14 1.6 L19.4 6.4 L11 15 Z" fill="none" stroke="#333333" stroke-width="1.15" stroke-linejoin="round"/></svg>
<div class="t" style="left:29.9px;top:259.20px;font-size:7.17px;line-height:8.60px;color:#222;transform:scaleX(0.992);">Strop</div>
<svg class="r" style="left:7.0px;top:276.0px" width="16.2" height="10.5" viewBox="0 0 20 16" preserveAspectRatio="none"><path d="M1 1 L8.4 2.4 L10 5 L13.4 5.6 L15 8.4 L18 9 L19.4 12 L11 15 L9.4 12 L6.6 11.4 L5 8.6 L2.4 8 Z M2.4 4.6 L9.4 3.8 M5 8.6 L12.6 7 M9.4 12 L16.4 10" fill="none" stroke="#333333" stroke-width="1.15" stroke-linejoin="round" stroke-width="1"/></svg>
<div class="t" style="left:29.9px;top:279.50px;font-size:7.17px;line-height:8.60px;color:#222;transform:scaleX(0.941);">Schody</div>
<svg class="r" style="left:7.6px;top:296.6px" width="15.6" height="10.0" viewBox="0 0 20 16" preserveAspectRatio="none"><path d="M1 15.4 V7.4 L19.4 1 V8.6 M1 11 L19.4 4.6 M6.6 13.6 V5.6 M13 11.4 V3.4" fill="none" stroke="#333333" stroke-width="1.15" stroke-linejoin="round"/></svg>
<div class="t" style="left:29.9px;top:298.80px;font-size:7.17px;line-height:8.60px;color:#222;transform:scaleX(0.945);">Balustrada</div>
<svg class="r" style="left:5.7px;top:315.0px" width="18.3" height="11.4" viewBox="0 0 20 16" preserveAspectRatio="none"><path d="M1 8.6 L7.4 1 L13 1 L19.4 10.4 L13 9 L7 15.2 Z M7.4 1 L13 9" fill="none" stroke="#333333" stroke-width="1.15" stroke-linejoin="round"/></svg>
<div class="t" style="left:29.9px;top:318.90px;font-size:7.17px;line-height:8.60px;color:#222;transform:scaleX(0.920);">Dach</div>
<svg class="r" style="left:6.2px;top:334.8px" width="17.8" height="12.6" viewBox="0 0 20 16" preserveAspectRatio="none"><path d="M1 3.4 L9 9.4 L19.4 1 L13 15 L9 9.4 L5.4 14.6 Z" fill="none" stroke="#333333" stroke-width="1.15" stroke-linejoin="round"/></svg>
<div class="t" style="left:29.9px;top:338.10px;font-size:7.17px;line-height:8.60px;color:#222;transform:scaleX(0.934);">Powłoka</div>
<svg class="r" style="left:7.0px;top:356.0px" width="16.2" height="10.5" viewBox="0 0 20 16" preserveAspectRatio="none"><path d="M1 3 L8.4 1 L19.4 9.6 L12 14.8 Z M4.6 6 L11.4 3.6 L16 8 L9 10.6 Z M1 8.6 L7 13.6" fill="none" stroke="#333333" stroke-width="1.15" stroke-linejoin="round" stroke-width="1"/></svg>
<div class="t" style="left:29.9px;top:357.80px;font-size:7.17px;line-height:8.60px;color:#222;transform:scaleX(0.926);">Świetlik</div>
<svg class="r" style="left:7.6px;top:374.0px" width="15.2" height="12.9" viewBox="0 0 20 16" preserveAspectRatio="none"><path d="M1 3 L19 1 V13 L1 15 Z M7 2.4 V14.4 M13 1.6 V13.6 M1 7 L19 5 M1 11 L19 9" fill="none" stroke="#333333" stroke-width="1.15" stroke-linejoin="round"/></svg>
<div class="t" style="left:29.9px;top:377.60px;font-size:7.17px;line-height:8.60px;color:#222;transform:scaleX(0.956);">Przegroda struk...</div>
<svg class="r" style="left:9.0px;top:393.9px" width="12.4" height="13.1" viewBox="0 0 20 16" preserveAspectRatio="none"><path d="M1 11 C1 5 5 1.6 9.6 1 L12 1.8 C12.6 5.6 14.6 8.4 19 9.8 L10.6 15.2 L1 11 Z M9.6 1 C9.4 6 9.8 11 10.6 15.2" fill="none" stroke="#333333" stroke-width="1.15" stroke-linejoin="round"/></svg>
<div class="t" style="left:29.9px;top:397.50px;font-size:7.17px;line-height:8.60px;color:#222;transform:scaleX(0.934);">Kształt</div>
<svg class="r" style="left:9.9px;top:413.0px" width="11.5" height="13.8" viewBox="0 0 20 16" preserveAspectRatio="none"><path d="M3 10 V3.4 C3 0 10 0 10 3.4 V8 M1.4 15.4 V9.8 H12 L18.4 8.4 V15.4 M12 9.8 V15.4 M6 10 V15.4" fill="none" stroke="#333333" stroke-width="1.15" stroke-linejoin="round" stroke-width="1.5"/></svg>
<div class="t" style="left:29.9px;top:417.50px;font-size:7.17px;line-height:8.60px;color:#222;transform:scaleX(0.970);">Obiekt</div>
<svg class="r" style="left:7.6px;top:434.0px" width="15.6" height="12.3" viewBox="0 0 20 16" preserveAspectRatio="none"><path d="M1 1.4 H6 V4.6 H13 V1.4 H19 V14.6 H1 Z" fill="none" stroke="#333333" stroke-width="1.15" stroke-linejoin="round"/><rect x="6" y="8" width="7.4" height="4" fill="#bdbdbd" stroke="#333333" stroke-width="0.6"/></svg>
<div class="t" style="left:29.9px;top:437.40px;font-size:7.17px;line-height:8.60px;color:#222;transform:scaleX(0.946);">Strefa</div>
<svg class="r" style="left:4.2px;top:454.0px" width="19.8" height="10.7" viewBox="0 0 20 16" preserveAspectRatio="none"><path d="M1 3 C5 5 8 1 12 2 L19.4 13 C15 12 13 16 8.6 14.6 Z M4.8 3.6 L12.6 14.6 M8.4 2.4 L16 12.6 M3.4 7 C7 8 10 5 14.4 5.8 M6 11 C9.6 11.8 12.6 9 17 9.6" fill="none" stroke="#333333" stroke-width="1.15" stroke-linejoin="round" stroke-width="0.9"/></svg>
<div class="t" style="left:29.9px;top:457.20px;font-size:7.17px;line-height:8.60px;color:#222;transform:scaleX(0.908);">Siatka</div>
<div class="r " style="left:0.0px;top:469.7px;width:87.6px;height:11.4px;background:#d9d9d9;"></div>
<svg class="r" style="left:3.4px;top:473.0px;" width="4.8" height="4.8" viewBox="0 0 4.8 4.8"><path d="M1.08 0 L3.84 2.40 L1.08 4.80Z" fill="#222"/></svg>
<div class="t" style="left:14.0px;top:472.10px;font-size:7.17px;line-height:8.60px;color:#222;transform:scaleX(0.958);">Dokument</div>
<div class="r " style="left:0.0px;top:483.0px;width:87.6px;height:11.0px;background:#d9d9d9;"></div>
<svg class="r" style="left:3.4px;top:486.2px;" width="4.8" height="4.8" viewBox="0 0 4.8 4.8"><path d="M1.08 0 L3.84 2.40 L1.08 4.80Z" fill="#222"/></svg>
<div class="t" style="left:14.0px;top:485.20px;font-size:7.17px;line-height:8.60px;color:#222;transform:scaleX(0.953);">Więcej</div>
<svg class="r" style="left:88.2px;top:107px" width="775.8" height="400" viewBox="88.2 107 775.8 400" font-family="Liberation Sans, sans-serif"><defs><pattern id="hc0" width="4.6" height="4.6" patternUnits="userSpaceOnUse" patternTransform="rotate(45)"><rect width="4.6" height="4.6" fill="#f19c7e"/><rect x="0" width="0.62" height="4.6" fill="#2a120a"/></pattern><pattern id="ht0" width="3.1" height="3.1" patternUnits="userSpaceOnUse" patternTransform="rotate(45)"><rect width="3.1" height="3.1" fill="#f19c7e"/><rect x="0" width="0.5" height="3.1" fill="#3a1a10"/></pattern><pattern id="hc1" width="4.6" height="4.6" patternUnits="userSpaceOnUse" patternTransform="rotate(45)"><rect width="4.6" height="4.6" fill="#f19c7e"/><rect x="0" width="0.62" height="4.6" fill="#2a120a"/></pattern><pattern id="ht1" width="3.1" height="3.1" patternUnits="userSpaceOnUse" patternTransform="rotate(45)"><rect width="3.1" height="3.1" fill="#f19c7e"/><rect x="0" width="0.5" height="3.1" fill="#3a1a10"/></pattern><pattern id="hc2" width="4.6" height="4.6" patternUnits="userSpaceOnUse" patternTransform="rotate(45)"><rect width="4.6" height="4.6" fill="#f19c7e"/><rect x="0" width="0.62" height="4.6" fill="#2a120a"/></pattern><pattern id="ht2" width="3.1" height="3.1" patternUnits="userSpaceOnUse" patternTransform="rotate(45)"><rect width="3.1" height="3.1" fill="#f19c7e"/><rect x="0" width="0.5" height="3.1" fill="#3a1a10"/></pattern><pattern id="hd" width="3.0" height="3.0" patternUnits="userSpaceOnUse" patternTransform="rotate(45)"><rect width="3.0" height="3.0" fill="#f19c7e"/><rect x="0" width="0.6" height="3.0" fill="#2a120a"/></pattern><pattern id="ht" width="2.6" height="2.6" patternUnits="userSpaceOnUse" patternTransform="rotate(45)"><rect width="2.6" height="2.6" fill="#f19c7e"/><rect x="0" width="0.5" height="2.6" fill="#3a1a10"/></pattern><pattern id="yi" width="2.1" height="2.1" patternUnits="userSpaceOnUse" patternTransform="rotate(20)"><rect width="2.1" height="2.1" fill="#635c1e"/><circle cx="1.05" cy="1.05" r="0.86" fill="#f2e85e"/></pattern></defs><rect x="88.2" y="107" width="775.8" height="400" fill="#ffffff"/><path d="M119.3 107 V507 M167.1 107 V507 M214.9 107 V507 M262.6 107 V507 M310.4 107 V507 M358.2 107 V507 M406.0 107 V507 M453.8 107 V507 M501.5 107 V507 M549.3 107 V507 M597.1 107 V507 M644.9 107 V507 M692.7 107 V507 M740.4 107 V507 M788.2 107 V507 M836.0 107 V507 M88.2 144.2 H864 M88.2 191.3 H864 M88.2 238.4 H864 M88.2 285.5 H864 M88.2 332.6 H864 M88.2 379.7 H864 M88.2 426.8 H864 M88.2 473.9 H864" stroke="#dedede" stroke-width="0.8" fill="none"/><polygon points="442.00,284.71 447.60,281.08 447.60,545 442.00,545" fill="url(#ht)"/><polygon points="447.60,281.08 450.40,279.27 450.40,545 447.60,545" fill="#ffffff"/><polygon points="450.40,279.27 455.20,276.15 455.20,545 450.40,545" fill="url(#yi)"/><polygon points="455.20,273.15 467.80,264.98 467.80,545 455.20,545" fill="url(#hd)"/><path d="M442.00 284.71 V545" stroke="#0a0a0a" stroke-width="1.3"/><path d="M447.60 281.08 V545" stroke="#0a0a0a" stroke-width="0.6"/><path d="M450.50 279.20 V545" stroke="#0a0a0a" stroke-width="0.7"/><path d="M455.20 276.15 V545" stroke="#0a0a0a" stroke-width="0.9"/><path d="M467.80 267.98 V545" stroke="#0a0a0a" stroke-width="1.3"/><polygon points="147.10,545.00 147.10,445.90 153.04,448.81 153.04,545.00" fill="url(#ht0)" stroke="#f19c7e" stroke-width="0.3"/><polygon points="147.10,445.90 664.20,110.60 666.09,116.13 153.04,448.81" fill="url(#ht1)" stroke="#f19c7e" stroke-width="0.3"/><polygon points="664.20,110.60 880.00,110.60 880.00,116.13 666.09,116.13" fill="url(#ht2)" stroke="#f19c7e" stroke-width="0.3"/><polygon points="153.04,545.00 153.04,448.81 666.09,116.13 880.00,116.13 880.00,118.35 666.84,118.35 155.42,449.97 155.42,545.00" fill="#ffffff"/><polygon points="155.42,545.00 155.42,449.97 666.84,118.35 880.00,118.35 880.00,123.39 668.56,123.39 160.83,452.62 160.83,545.00" fill="url(#yi)"/><polygon points="160.83,545.00 160.83,452.62 173.50,458.82 173.50,545.00" fill="url(#hc0)" stroke="#f19c7e" stroke-width="0.3"/><polygon points="160.83,452.62 668.56,123.39 672.58,135.20 173.50,458.82" fill="url(#hc1)" stroke="#f19c7e" stroke-width="0.3"/><polygon points="668.56,123.39 880.00,123.39 880.00,135.20 672.58,135.20" fill="url(#hc2)" stroke="#f19c7e" stroke-width="0.3"/><polygon points="455.70,269.83 467.20,262.37 467.20,269.57 455.70,277.03" fill="url(#hc1)"/><path d="M147.10 545.00 L147.10 445.90 L664.20 110.60 L880.00 110.60" fill="none" stroke="#0a0a0a" stroke-width="1.3" stroke-linejoin="miter"/><path d="M153.04 545.00 L153.04 448.81 L666.09 116.13 L880.00 116.13" fill="none" stroke="#4a2a20" stroke-width="0.4" stroke-linejoin="miter"/><path d="M155.42 545.00 L155.42 449.97 L666.84 118.35 L880.00 118.35" fill="none" stroke="#0a0a0a" stroke-width="0.85" stroke-linejoin="miter"/><path d="M160.83 545.00 L160.83 452.62 L668.56 123.39 L880.00 123.39" fill="none" stroke="#0a0a0a" stroke-width="1.1" stroke-linejoin="miter"/><path d="M173.50 545.00 L173.50 458.82 L455.20 276.15" fill="none" stroke="#0a0a0a" stroke-width="1.3"/><path d="M467.80 267.98 L672.58 135.20 L880.00 135.20" fill="none" stroke="#0a0a0a" stroke-width="1.3"/><g transform="translate(147.1 445.9) rotate(-32.960)"><rect x="55.4" y="-0.9" width="41.4" height="27.0" fill="#fff"/><path d="M55.4 0 H96.8 M55.4 25.2 H96.8" stroke="#222" stroke-width="0.55"/><path d="M55.4 -0.7 V25.9 M96.8 -0.7 V25.9" stroke="#0a0a0a" stroke-width="1.3"/><rect x="57.4" y="12.9" width="37.4" height="3.2" fill="#b9b9b9"/><path d="M57.4 12.9 H94.8 M57.4 16.1 H94.8 M57.4 14.5 H94.8" stroke="#6a6a6a" stroke-width="0.4"/><circle cx="56.6" cy="14.5" r="1.65" fill="#e4e4e4" stroke="#0a0a0a" stroke-width="0.95"/><circle cx="95.6" cy="14.5" r="1.65" fill="#e4e4e4" stroke="#0a0a0a" stroke-width="0.95"/><path d="M75.3 -35.4 V37" stroke="#8fc3ea" stroke-width="0.95"/><circle cx="74.7" cy="-47.3" r="11.6" fill="#fff" stroke="#8a8a8a" stroke-width="0.6"/><text x="74.7" y="-45.2" font-size="6.4" text-anchor="middle" fill="#0a0a0a" stroke="#0a0a0a" stroke-width="0.12">O1</text><text transform="translate(76.89999999999999 -25) rotate(90)" font-size="6.2" text-anchor="middle" fill="#0a0a0a" stroke="#0a0a0a" stroke-width="0.12">90</text><text transform="translate(68.7 -22.6) rotate(90)" font-size="6.2" text-anchor="middle" fill="#0a0a0a" stroke="#0a0a0a" stroke-width="0.12">150</text><text x="74.1" y="34.8" font-size="6.2" text-anchor="end" fill="#0a0a0a" stroke="#0a0a0a" stroke-width="0.12">hp</text><text x="76.7" y="34.8" font-size="6.2" text-anchor="start" fill="#0a0a0a" stroke="#0a0a0a" stroke-width="0.12">90</text><rect x="130.5" y="-0.9" width="41.80000000000001" height="27.0" fill="#fff"/><path d="M130.5 0 H172.3 M130.5 25.2 H172.3" stroke="#222" stroke-width="0.55"/><path d="M130.5 -0.7 V25.9 M172.3 -0.7 V25.9" stroke="#0a0a0a" stroke-width="1.3"/><rect x="132.5" y="12.9" width="37.80000000000001" height="3.2" fill="#b9b9b9"/><path d="M132.5 12.9 H170.3 M132.5 16.1 H170.3 M132.5 14.5 H170.3" stroke="#6a6a6a" stroke-width="0.4"/><circle cx="131.7" cy="14.5" r="1.65" fill="#e4e4e4" stroke="#0a0a0a" stroke-width="0.95"/><circle cx="171.10000000000002" cy="14.5" r="1.65" fill="#e4e4e4" stroke="#0a0a0a" stroke-width="0.95"/><path d="M151.3 -35.4 V37" stroke="#8fc3ea" stroke-width="0.95"/><circle cx="150.70000000000002" cy="-47.3" r="11.6" fill="#fff" stroke="#8a8a8a" stroke-width="0.6"/><text x="150.70000000000002" y="-45.2" font-size="6.4" text-anchor="middle" fill="#0a0a0a" stroke="#0a0a0a" stroke-width="0.12">O2</text><text transform="translate(152.9 -25) rotate(90)" font-size="6.2" text-anchor="middle" fill="#0a0a0a" stroke="#0a0a0a" stroke-width="0.12">90</text><text transform="translate(144.70000000000002 -22.6) rotate(90)" font-size="6.2" text-anchor="middle" fill="#0a0a0a" stroke="#0a0a0a" stroke-width="0.12">150</text><text x="150.10000000000002" y="34.8" font-size="6.2" text-anchor="end" fill="#0a0a0a" stroke="#0a0a0a" stroke-width="0.12">hp</text><text x="152.70000000000002" y="34.8" font-size="6.2" text-anchor="start" fill="#0a0a0a" stroke="#0a0a0a" stroke-width="0.12">90</text><rect x="209.6" y="-0.9" width="42.20000000000002" height="27.0" fill="#fff"/><path d="M209.6 0 H251.8 M209.6 25.2 H251.8" stroke="#222" stroke-width="0.55"/><path d="M209.6 -0.7 V25.9 M251.8 -0.7 V25.9" stroke="#0a0a0a" stroke-width="1.3"/><rect x="211.6" y="12.9" width="38.20000000000002" height="3.2" fill="#b9b9b9"/><path d="M211.6 12.9 H249.8 M211.6 16.1 H249.8 M211.6 14.5 H249.8" stroke="#6a6a6a" stroke-width="0.4"/><circle cx="210.79999999999998" cy="14.5" r="1.65" fill="#e4e4e4" stroke="#0a0a0a" stroke-width="0.95"/><circle cx="250.60000000000002" cy="14.5" r="1.65" fill="#e4e4e4" stroke="#0a0a0a" stroke-width="0.95"/><path d="M230.5 -35.4 V37" stroke="#8fc3ea" stroke-width="0.95"/><circle cx="229.9" cy="-47.3" r="11.6" fill="#fff" stroke="#8a8a8a" stroke-width="0.6"/><text x="229.9" y="-45.2" font-size="6.4" text-anchor="middle" fill="#0a0a0a" stroke="#0a0a0a" stroke-width="0.12">O3</text><text transform="translate(232.1 -25) rotate(90)" font-size="6.2" text-anchor="middle" fill="#0a0a0a" stroke="#0a0a0a" stroke-width="0.12">90</text><text transform="translate(223.9 -22.6) rotate(90)" font-size="6.2" text-anchor="middle" fill="#0a0a0a" stroke="#0a0a0a" stroke-width="0.12">150</text><text x="229.3" y="34.8" font-size="6.2" text-anchor="end" fill="#0a0a0a" stroke="#0a0a0a" stroke-width="0.12">hp</text><text x="231.9" y="34.8" font-size="6.2" text-anchor="start" fill="#0a0a0a" stroke="#0a0a0a" stroke-width="0.12">90</text><rect x="436.4" y="-0.9" width="57.10000000000002" height="27.0" fill="#fff"/><rect x="436.4" y="0" width="57.10000000000002" height="25.2" fill="none" stroke="#3fae55" stroke-width="0.9"/><path d="M464.6 -35 V41" stroke="#3fae55" stroke-width="0.8"/><path d="M438.4 15 H491.5" stroke="#3fb34f" stroke-width="3.2"/><circle cx="463.8" cy="-47" r="12" fill="#e6f6e6" stroke="#3fae55" stroke-width="0.8"/><text transform="translate(463.8 -47) rotate(180)" x="0" y="2.2" font-size="5.8" text-anchor="middle" fill="#222">O4</text><rect x="462.20000000000005" y="-48.4" width="2.6" height="2.6" fill="#b020b0" transform="rotate(45 463.5 -47.1)"/><text transform="translate(466.40000000000003 -22) rotate(90)" font-size="6.2" text-anchor="middle" fill="#0a0a0a" stroke="#0a0a0a" stroke-width="0.12">120</text><text transform="translate(458.0 -20) rotate(90)" font-size="6.2" text-anchor="middle" fill="#0a0a0a" stroke="#0a0a0a" stroke-width="0.12">150</text><text transform="translate(465.1 30.2) rotate(180)" x="0" y="0" font-size="6.2" text-anchor="middle" fill="#0a0a0a" stroke="#0a0a0a" stroke-width="0.12">hp 90</text><circle cx="436.4" cy="0" r="1.5" fill="#0a0a0a"/><circle cx="493.5" cy="0" r="1.5" fill="#0a0a0a"/><circle cx="436.4" cy="25.2" r="1.5" fill="#0a0a0a"/><circle cx="493.5" cy="25.2" r="1.5" fill="#0a0a0a"/><circle cx="437.9" cy="14.5" r="2.0" fill="#0a0a0a"/><circle cx="492.0" cy="14.5" r="2.0" fill="#0a0a0a"/><circle cx="464.6" cy="25.7" r="1.4" fill="#0a0a0a"/><rect x="463.3" y="-29.8" width="2.6" height="2.6" fill="#b020b0" transform="rotate(45 464.6 -28.5)"/><rect x="463.3" y="38.7" width="2.6" height="2.6" fill="#b020b0" transform="rotate(45 464.6 40)"/><rect x="491.2" y="15.899999999999999" width="2.6" height="2.6" fill="#b020b0" transform="rotate(45 492.5 17.2)"/></g><rect x="465" y="108.6" width="20" height="7.6" rx="1" fill="#f6f4f2"/><path d="M466 112.39999999999999 H484" stroke="#f3b989" stroke-width="0.8" stroke-dasharray="2.4 1.6"/><rect x="91.4" y="296.6" width="6.6" height="20" rx="1" fill="#f6f4f2"/><path d="M94.7 297.6 V315.6" stroke="#f3b989" stroke-width="0.8" stroke-dasharray="2.4 1.6"/><rect x="853.2" y="297.4" width="8.6" height="19" rx="1" fill="#f6f4f2"/><path d="M857.5 298.4 V315.4" stroke="#f3b989" stroke-width="0.8" stroke-dasharray="2.4 1.6"/><rect x="469.6" y="499.6" width="15.6" height="4.8" rx="1" fill="#f6f4f2"/><path d="M470.6 502.0 H484.20000000000005" stroke="#f3b989" stroke-width="0.8" stroke-dasharray="2.4 1.6"/></svg>
<div class="t" style="left:99.4px;top:118.76px;font-size:7.06px;line-height:8.47px;color:#4a4a4a;transform:scaleX(0.987);">ARCHICAD</div>
<div class="t" style="left:783.7px;top:486.75px;font-size:10.91px;line-height:13.09px;color:#5e5e5e;transform:scaleX(0.921);">GRAPHISOFT.</div>
<div class="r " style="left:136.0px;top:112.2px;width:264.8px;height:153.2px;background:#f0f0f0;border:0.6px solid #b9b9b9;box-sizing:border-box;box-shadow:0 1.5px 6px 1px rgba(0,0,0,0.38);"></div>
<div class="t" style="left:140.9px;top:117.06px;font-size:8.56px;line-height:10.27px;color:#111;transform:scaleX(0.904);">Znajdź i zaznacz</div>
<div class="r " style="left:386.3px;top:117.0px;width:12.8px;height:12.0px;background:#c83c44;"></div>
<svg class="r" style="left:390.0px;top:120.4px" width="5.4" height="5.4" viewBox="0 0 10 10"><path d="M1.6 1.6 L8.4 8.4 M8.4 1.6 L1.6 8.4" stroke="#fff" stroke-width="1.5"/></svg>
<div class="t" style="left:137.6px;top:136.02px;font-size:6.96px;line-height:8.35px;color:#222;transform:scaleX(0.977);">Nazwa zestawu kryteriów:</div>
<div class="r " style="left:241.9px;top:132.9px;width:139.6px;height:12.8px;background:#fff;border:0.7px solid #8a8a8a;box-sizing:border-box;border-radius:1px;"></div>
<div class="t" style="left:256.4px;top:136.02px;font-size:6.96px;line-height:8.35px;color:#222;transform:scaleX(0.960);">Użytkownika</div>
<svg class="r" style="left:372.4px;top:137.2px" width="6.4" height="4.4" viewBox="0 0 10 6"><path d="M1 1 L5 5 L9 1" fill="none" stroke="#444" stroke-width="1.1"/></svg>
<div class="r " style="left:384.7px;top:133.0px;width:13.5px;height:12.7px;background:#e1e1e1;border:0.7px solid #adadad;box-sizing:border-box;"></div>
<svg class="r" style="left:389.6px;top:137.4px;" width="4.0" height="4.0" viewBox="0 0 4.0 4.0"><path d="M0.90 0 L3.20 2.00 L0.90 4.00Z" fill="#111"/></svg>
<div class="r " style="left:137.6px;top:154.6px;width:250.3px;height:59.6px;background:#ffffff;"></div>
<div class="r " style="left:387.9px;top:154.6px;width:11.4px;height:59.6px;background:#f0f0f0;"></div>
<div class="r " style="left:137.6px;top:167.4px;width:250.3px;height:0.5px;background:#ededed;"></div>
<div class="r " style="left:192.8px;top:154.6px;width:0.5px;height:13.0px;background:#ededed;"></div>
<div class="r " style="left:225.4px;top:154.6px;width:0.5px;height:13.0px;background:#ededed;"></div>
<div class="r " style="left:384.4px;top:154.6px;width:0.5px;height:13.0px;background:#ededed;"></div>
<div class="t" style="left:139.5px;top:157.96px;font-size:6.74px;line-height:8.09px;color:#222;transform:scaleX(1.012);">Kryteria</div>
<div class="t" style="left:226.8px;top:157.96px;font-size:6.74px;line-height:8.09px;color:#222;transform:scaleX(1.046);">Wartość</div>
<div class="t" style="left:139.5px;top:170.96px;font-size:6.74px;line-height:8.09px;color:#222;transform:scaleX(1.013);">Typ elementu</div>
<div class="t" style="left:194.4px;top:170.96px;font-size:6.74px;line-height:8.09px;color:#222;transform:scaleX(1.049);">jest</div>
<svg class="r" style="left:229.0px;top:169.4px" width="10.4" height="9.6" viewBox="0 0 16 16"><path d="M1.4 3 L14.6 1.4 V13 L1.4 14.6 Z M8 2.2 V13.8 M1.4 8.8 L14.6 7.2" fill="none" stroke="#2b2b2b" stroke-width="1.3"/></svg>
<div class="t" style="left:244.5px;top:171.16px;font-size:6.74px;line-height:8.09px;color:#222;transform:scaleX(0.981);">Okno</div>
<div class="r " style="left:137.6px;top:181.4px;width:250.3px;height:14.2px;background:#0078d7;"></div>
<div class="t" style="left:139.5px;top:185.22px;font-size:6.96px;line-height:8.35px;color:#fff;transform:scaleX(0.985);">Szerokość</div>
<div class="r " style="left:193.0px;top:182.0px;width:31.4px;height:13.0px;background:#e1e1e1;border:0.6px solid #9a9a9a;box-sizing:border-box;"></div>
<div class="t" style="left:199.4px;top:185.02px;font-size:6.96px;line-height:8.35px;color:#222;transform:scaleX(0.886);">=</div>
<svg class="r" style="left:218.0px;top:186.6px;" width="4.0" height="4.0" viewBox="0 0 4.0 4.0"><path d="M0.90 0 L3.20 2.00 L0.90 4.00Z" fill="#111"/></svg>
<div class="r " style="left:225.9px;top:182.0px;width:57.8px;height:13.0px;background:#ffffff;"></div>
<div class="t" style="left:227.2px;top:185.22px;font-size:6.96px;line-height:8.35px;color:#222;transform:scaleX(0.911);">120,00</div>
<svg class="r" style="left:390.4px;top:170.6px" width="5.8" height="3.8" viewBox="0 0 10 6"><path d="M1 5 L5 1 L9 5" fill="none" stroke="#9a9a9a" stroke-width="1.2"/></svg>
<svg class="r" style="left:390.4px;top:206.6px" width="5.8" height="3.8" viewBox="0 0 10 6"><path d="M1 1 L5 5 L9 1" fill="none" stroke="#9a9a9a" stroke-width="1.2"/></svg>
<div class="r " style="left:138.3px;top:218.9px;width:43.9px;height:13.8px;background:#e1e1e1;border:0.7px solid #adadad;box-sizing:border-box;"></div>
<div class="t" style="left:149.2px;top:222.42px;font-size:6.96px;line-height:8.35px;color:#222;transform:scaleX(0.942);">Dodaj...</div>
<div class="r " style="left:182.2px;top:218.9px;width:13.8px;height:13.8px;background:#e1e1e1;border:0.7px solid #adadad;box-sizing:border-box;"></div>
<svg class="r" style="left:187.1px;top:223.6px;" width="4.2" height="4.2" viewBox="0 0 4.2 4.2"><path d="M0 1.05 L4.20 1.05 L2.10 3.36Z" fill="#222"/></svg>
<div class="r " style="left:204.0px;top:218.9px;width:58.2px;height:13.8px;background:#e1e1e1;border:0.7px solid #adadad;box-sizing:border-box;"></div>
<div class="t" style="left:226.4px;top:222.42px;font-size:6.96px;line-height:8.35px;color:#222;transform:scaleX(0.899);">Usuń</div>
<div class="r " style="left:339.8px;top:218.9px;width:26.8px;height:13.8px;background:#bedbf4;border:0.7px solid #2f7fd1;box-sizing:border-box;"></div>
<svg class="r" style="left:341.6px;top:220.6px" width="10.4" height="10.4" viewBox="0 0 16 16"><path d="M2 14 L3 11 L9.5 4.5 L11.5 6.5 L5 13 Z" fill="#2f7fd1" stroke="#1d5ea8" stroke-width="0.8"/><path d="M8.4 3.4 L12.6 7.6" stroke="#2b2b2b" stroke-width="1.6"/><path d="M10.5 5.5 L13 3" stroke="#2b2b2b" stroke-width="2.6" stroke-linecap="round"/></svg>
<svg class="r" style="left:353.8px;top:221.2px" width="10.4" height="9.6" viewBox="0 0 16 16"><path d="M1.4 13 H8 C12 13 13 9.6 12.4 5" fill="none" stroke="#2b2b2b" stroke-width="1.3"/><path d="M10 6.6 L12.4 3 L14.8 6.6" fill="none" stroke="#2b2b2b" stroke-width="1.3"/></svg>
<div class="r " style="left:371.8px;top:218.9px;width:26.8px;height:13.8px;background:#e1e1e1;border:0.7px solid #adadad;box-sizing:border-box;"></div>
<svg class="r" style="left:373.8px;top:220.8px" width="10.6" height="10.4" viewBox="0 0 16 16"><rect x="3" y="3" width="10" height="10" fill="none" stroke="#2b2b2b" stroke-width="1.3"/><rect x="1.2" y="1.2" width="3" height="3" fill="#2b2b2b"/><rect x="11.8" y="1.2" width="3" height="3" fill="#2b2b2b"/><rect x="1.2" y="11.8" width="3" height="3" fill="#2b2b2b"/><rect x="11.8" y="11.8" width="3" height="3" fill="#2b2b2b"/></svg>
<svg class="r" style="left:386.0px;top:221.2px" width="10.4" height="9.6" viewBox="0 0 16 16"><path d="M1.4 13 H8 C12 13 13 9.6 12.4 5" fill="none" stroke="#2b2b2b" stroke-width="1.3"/><path d="M10 6.6 L12.4 3 L14.8 6.6" fill="none" stroke="#2b2b2b" stroke-width="1.3"/></svg>
<div class="r " style="left:136.6px;top:240.2px;width:263.6px;height:0.6px;background:#d4d4d4;"></div>
<div class="r " style="left:136.6px;top:240.8px;width:263.6px;height:0.5px;background:#fbfbfb;"></div>
<div class="r " style="left:241.8px;top:241.4px;width:0.6px;height:23.6px;background:#cfcfcf;"></div>
<div class="r " style="left:242.4px;top:241.4px;width:0.5px;height:23.6px;background:#fbfbfb;"></div>
<div class="t" style="left:137.6px;top:246.86px;font-size:6.74px;line-height:8.09px;color:#222;transform:scaleX(0.980);">Zaznaczonych:</div>
<div class="t" style="left:137.6px;top:257.46px;font-size:6.74px;line-height:8.09px;color:#222;transform:scaleX(1.034);">Modyfikowalnych:</div>
<div class="t" style="left:230.6px;top:246.86px;font-size:6.74px;line-height:8.09px;color:#222;">1</div>
<div class="t" style="left:230.6px;top:257.46px;font-size:6.74px;line-height:8.09px;color:#222;">1</div>
<div class="r " style="left:249.9px;top:247.8px;width:38.5px;height:13.4px;background:#e1e1e1;border:0.7px solid #adadad;box-sizing:border-box;"></div>
<div class="r " style="left:266.4px;top:254.2px;width:6.4px;height:0.7px;background:#222;"></div>
<div class="t" style="left:305.4px;top:251.22px;font-size:6.96px;line-height:8.35px;color:#222;transform:scaleX(0.938);">Zaznaczenie</div>
<div class="r " style="left:360.0px;top:247.8px;width:37.6px;height:13.4px;background:#e1e1e1;border:0.7px solid #adadad;box-sizing:border-box;"></div>
<svg class="r" style="left:375.8px;top:251.0px" width="7.0" height="7.0" viewBox="0 0 10 10"><path d="M5 0.6 V9.4 M0.6 5 H9.4" stroke="#222" stroke-width="1"/></svg>
<div class="r " style="left:353.2px;top:245.6px;width:55.8px;height:19.2px;border:2.1px solid #e3212b;box-sizing:border-box;border-radius:3px;"></div>
<div class="r " style="left:863.6px;top:93.6px;width:150.0px;height:437.0px;background:#f0f0f0;"></div>
<div class="r " style="left:863.2px;top:93.6px;width:0.6px;height:428.0px;background:#dcdcdc;"></div>
<div class="r " style="left:914.7px;top:94.6px;width:47.2px;height:0.8px;background:#b5b5b5;"></div>
<div class="r " style="left:864.8px;top:100.2px;width:27.8px;height:18.2px;background:#e3e3e3;border:0.6px solid #d2d2d2;box-sizing:border-box;"></div>
<svg class="r" style="left:871.4px;top:103.6px" width="9.2" height="11.8" viewBox="0 0 16 16" preserveAspectRatio="none"><circle cx="5.4" cy="4.4" r="3.4" fill="none" stroke="#333333" stroke-width="1.3" stroke-linejoin="round"/><path d="M5.4 7.8 V13 H9 M5.4 10 H9" fill="none" stroke="#333333" stroke-width="1.3" stroke-linejoin="round"/><path d="M10.6 10 H14.6 M10.6 13 H14.6" stroke="#333333" stroke-width="1.6"/></svg>
<svg class="r" style="left:886.8px;top:107.1px;" width="4.8" height="4.8" viewBox="0 0 4.8 4.8"><path d="M1.08 0 L3.84 2.40 L1.08 4.80Z" fill="#222"/></svg>
<div class="r " style="left:933.9px;top:99.6px;width:19.2px;height:19.2px;background:#bedbf4;"></div>
<svg class="r" style="left:938.0px;top:105.0px" width="12.2" height="9.2" viewBox="0 0 16 16" preserveAspectRatio="none"><path d="M1 14.6 V7 L6 1.4 L11 7 H15 V14.6 Z M6 1.4 V14.6 M11 7 V14.6" fill="none" stroke="#333333" stroke-width="1.3" stroke-linejoin="round" stroke-width="1.5"/></svg>
<svg class="r" style="left:957.0px;top:105.0px" width="11.8" height="9.2" viewBox="0 0 16 16" preserveAspectRatio="none"><path d="M1 1.4 H5.6 V5 H15 V14.6 H1 Z" fill="none" stroke="#333333" stroke-width="1.3" stroke-linejoin="round" stroke-width="1.5"/></svg>
<svg class="r" style="left:977.2px;top:104.4px" width="12.8" height="10.2" viewBox="0 0 16 16" preserveAspectRatio="none"><path d="M4 1.4 H14.6 V12 H12 M4 1.4 C1 1.4 1.4 4 1.4 14.6 H12 V12 M4 1.4 V12 C4 10 1.4 10 1.4 12" fill="none" stroke="#333333" stroke-width="1.3" stroke-linejoin="round" stroke-width="1.4"/><rect x="12" y="12" width="2.6" height="2.6" fill="#333333"/></svg>
<svg class="r" style="left:997.2px;top:104.4px" width="10.6" height="10.2" viewBox="0 0 16 16" preserveAspectRatio="none"><path d="M3.4 1.4 H12 L14.6 4 V14.6 H6 L3.4 12 Z" fill="#d8d8d8" stroke="#333333" stroke-width="1.4"/><path d="M1.4 3.4 H10 V12.6 H1.4 Z" fill="#f4f4f4" stroke="#333333" stroke-width="1.4"/></svg>
<div class="r " style="left:864.4px;top:120.6px;width:137.4px;height:325.4px;background:#ffffff;"></div>
<div class="r " style="left:864.4px;top:121.2px;width:136.8px;height:13.4px;background:#d9d9d9;"></div>
<div class="r " style="left:1001.8px;top:120.6px;width:11.2px;height:325.4px;background:#f0f0f0;"></div>
<div class="r " style="left:1002.4px;top:165.4px;width:8.6px;height:184.6px;background:#cdcdcd;"></div>
<svg class="r" style="left:1002.8px;top:124.2px" width="7.2" height="4.6" viewBox="0 0 10 6" preserveAspectRatio="none"><path d="M1 5 L5 1 L9 5" fill="none" stroke="#444" stroke-width="1.4"/></svg>
<svg class="r" style="left:1002.8px;top:438.2px" width="7.2" height="4.6" viewBox="0 0 10 6" preserveAspectRatio="none"><path d="M1 1 L5 5 L9 1" fill="none" stroke="#444" stroke-width="1.4"/></svg>
<svg class="r" style="left:891.0px;top:123.3px" width="11.4" height="9.0" viewBox="0 0 16 16" preserveAspectRatio="none"><path d="M1 1.6 H5.6 V5 H15 V14.4 H1 Z" fill="#fff" stroke="#333333" stroke-width="1.4" stroke-linejoin="round"/></svg>
<div class="t" style="left:906.2px;top:124.82px;font-size:6.96px;line-height:8.35px;color:#1e1e1e;font-weight:bold;transform:scaleX(0.998);">0. Poziom 0</div>
<svg class="r" style="left:891.0px;top:137.8px" width="11.4" height="9.0" viewBox="0 0 16 16" preserveAspectRatio="none"><path d="M1 1.6 H5.6 V5 H15 V14.4 H1 Z" fill="#fff" stroke="#333333" stroke-width="1.4" stroke-linejoin="round"/></svg>
<div class="t" style="left:906.2px;top:139.32px;font-size:6.96px;line-height:8.35px;color:#1e1e1e;transform:scaleX(0.976);">-1. Poziom -1</div>
<svg class="r" style="left:884.6px;top:152.0px" width="11.2" height="10.0" viewBox="0 0 16 16" preserveAspectRatio="none"><path d="M1 14 V6.6 L8 1.6 L15 6.6 V14 Z M1 6.6 H15 M1 10 H15" fill="#fff" stroke="#333333" stroke-width="1.3" stroke-linejoin="round"/></svg>
<div class="t" style="left:899.0px;top:154.02px;font-size:6.96px;line-height:8.35px;color:#1e1e1e;transform:scaleX(0.953);">Przekroje</div>
<svg class="r" style="left:884.6px;top:166.4px" width="11.2" height="10.0" viewBox="0 0 16 16" preserveAspectRatio="none"><path d="M1 14 V6.6 L8 1.6 L15 6.6 V14 Z M1 6.6 H15" fill="#fff" stroke="#333333" stroke-width="1.3" stroke-linejoin="round"/></svg>
<div class="t" style="left:899.0px;top:168.42px;font-size:6.96px;line-height:8.35px;color:#1e1e1e;transform:scaleX(0.916);">Elewacje</div>
<svg class="r" style="left:884.6px;top:181.1px" width="11.2" height="10.0" viewBox="0 0 16 16" preserveAspectRatio="none"><rect x="1" y="2" width="14" height="12" rx="1" fill="#fff" stroke="#333333" stroke-width="1.3"/><path d="M4.6 2 V14 M7 2 V14" stroke="#333333" stroke-width="1"/><rect x="9.4" y="4.4" width="3.4" height="3" fill="none" stroke="#333333" stroke-width="0.9"/></svg>
<div class="t" style="left:899.0px;top:183.12px;font-size:6.96px;line-height:8.35px;color:#1e1e1e;transform:scaleX(0.953);">Rozwinięcia ścian</div>
<svg class="r" style="left:884.6px;top:195.7px" width="11.2" height="10.0" viewBox="0 0 16 16" preserveAspectRatio="none"><path d="M1 2 H11.4 L15 5.4 V14 H1 Z" fill="#fff" stroke="#333333" stroke-width="1.3" stroke-linejoin="round"/><path d="M3.4 11.4 L4.2 9 L9.6 4 L11.4 5.8 L6 10.8 Z M3 12.4 H13" fill="none" stroke="#333333" stroke-width="1"/></svg>
<div class="t" style="left:899.0px;top:197.72px;font-size:6.96px;line-height:8.35px;color:#1e1e1e;transform:scaleX(0.972);">Obszary 2D</div>
<svg class="r" style="left:884.6px;top:210.2px" width="11.2" height="10.0" viewBox="0 0 16 16" preserveAspectRatio="none"><circle cx="8" cy="8" r="6.8" fill="#fff" stroke="#333333" stroke-width="1.3"/><path d="M5.6 1.8 V14.2 M5.6 8.6 H14.6 M9 8.6 C9 5 11 4.4 13.6 4.6" fill="none" stroke="#333333" stroke-width="1.2"/></svg>
<div class="t" style="left:899.0px;top:212.22px;font-size:6.96px;line-height:8.35px;color:#1e1e1e;transform:scaleX(0.944);">Detale</div>
<svg class="r" style="left:884.6px;top:224.9px" width="11.2" height="10.0" viewBox="0 0 16 16" preserveAspectRatio="none"><path d="M1 2 H11.4 L15 5.4 V14 H1 Z" fill="#fff" stroke="#333333" stroke-width="1.3" stroke-linejoin="round"/><path d="M4 6.6 H9.6 V12 H4 Z M4 6.6 L5.6 5 H11 V10.4 L9.6 12 M9.6 6.6 L11 5" fill="none" stroke="#333333" stroke-width="1"/></svg>
<div class="t" style="left:899.0px;top:226.92px;font-size:6.96px;line-height:8.35px;color:#1e1e1e;transform:scaleX(0.971);">Dokumenty 3D</div>
<svg class="r" style="left:885.4px;top:239.4px" width="10.4" height="10.0" viewBox="0 0 16 16" preserveAspectRatio="none"><path d="M2 3.4 L10.4 1.2 L14 2.6 V13.2 L10.4 14.8 L2 12.6 Z" fill="#fff" stroke="#333333" stroke-width="1.3" stroke-linejoin="round"/><path d="M10.4 1.2 V14.8" stroke="#333333" stroke-width="1.2"/><path d="M2 3.4 L10.4 1.2 V14.8 L2 12.6 Z" fill="#e2e2e2" stroke="none"/><path d="M2 3.4 L10.4 1.2 V14.8 L2 12.6 Z" fill="none" stroke="#333333" stroke-width="1.2"/></svg>
<div class="t" style="left:899.0px;top:241.42px;font-size:6.96px;line-height:8.35px;color:#1e1e1e;transform:scaleX(0.865);">3D</div>
<svg class="r" style="left:874.8px;top:243.2px" width="5.6" height="3.6" viewBox="0 0 10 6" preserveAspectRatio="none"><path d="M1 1 L5 5 L9 1" fill="none" stroke="#222" stroke-width="1.6"/></svg>
<svg class="r" style="left:892.0px;top:253.9px" width="9.8" height="10.0" viewBox="0 0 16 16" preserveAspectRatio="none"><path d="M2 3 L10.6 1.2 L14 2.4 V13.4 L10.6 14.8 L2 13 Z M10.6 1.2 V14.8" fill="#fff" stroke="#333333" stroke-width="1.3" stroke-linejoin="round"/></svg>
<div class="t" style="left:906.2px;top:255.92px;font-size:6.96px;line-height:8.35px;color:#1e1e1e;transform:scaleX(0.985);">Ogólna perspektywa</div>
<svg class="r" style="left:892.0px;top:268.5px" width="9.8" height="10.0" viewBox="0 0 16 16" preserveAspectRatio="none"><path d="M1.6 4.6 L4.6 1.4 H14.4 V11 L11.4 14.6 H1.6 Z M1.6 4.6 H11.4 V14.6 M11.4 4.6 L14.4 1.4" fill="#fff" stroke="#333333" stroke-width="1.3" stroke-linejoin="round"/></svg>
<div class="t" style="left:906.2px;top:270.52px;font-size:6.96px;line-height:8.35px;color:#1e1e1e;transform:scaleX(0.995);">Ogólna aksonometria</div>
<svg class="r" style="left:891.4px;top:282.9px" width="11.0" height="10.0" viewBox="0 0 16 16" preserveAspectRatio="none"><path d="M6 2.4 H13 C15.4 2.4 15.4 7.6 13 7.6 H7 L4.4 10 V7.6 C2 7.6 2 2.4 6 2.4 Z" fill="#fff" stroke="#333333" stroke-width="1.2"/><path d="M1 13.6 L4 11.4 M10.6 9.6 L14 11 L12.4 13.4 Z" fill="none" stroke="#333333" stroke-width="1.1"/></svg>
<div class="t" style="left:906.2px;top:284.92px;font-size:6.96px;line-height:8.35px;color:#1e1e1e;transform:scaleX(0.944);">00 Ścieżka bez nazwy</div>
<svg class="r" style="left:886.2px;top:297.2px" width="8.8" height="11.0" viewBox="0 0 16 16" preserveAspectRatio="none"><rect x="1.2" y="1" width="13.6" height="14" rx="1" fill="#fff" stroke="#333333" stroke-width="1.5"/><path d="M1.2 5.6 H14.8 M1.2 10.4 H14.8 M5.8 1 V15 M10.2 1 V15" stroke="#333333" stroke-width="1.2"/></svg>
<div class="t" style="left:899.0px;top:299.72px;font-size:6.96px;line-height:8.35px;color:#1e1e1e;transform:scaleX(0.940);">Zestawienia</div>
<svg class="r" style="left:874.8px;top:301.5px" width="5.6" height="3.6" viewBox="0 0 10 6" preserveAspectRatio="none"><path d="M1 1 L5 5 L9 1" fill="none" stroke="#222" stroke-width="1.6"/></svg>
<svg class="r" style="left:891.0px;top:312.1px" width="11.6" height="10.0" viewBox="0 0 16 16" preserveAspectRatio="none"><rect x="1" y="3.6" width="14" height="6.4" fill="#555" stroke="#333333" stroke-width="1"/><path d="M2 10 L6 3.6 M5 10 L9 3.6 M8 10 L12 3.6 M11 10 L15 3.6" stroke="#e8e8e8" stroke-width="1"/></svg>
<div class="t" style="left:906.2px;top:314.12px;font-size:6.96px;line-height:8.35px;color:#1e1e1e;transform:scaleX(0.924);">Elementy</div>
<svg class="r" style="left:883.0px;top:314.9px" width="3.6" height="5.6" viewBox="0 0 6 10" preserveAspectRatio="none"><path d="M1 1 L5 5 L1 9" fill="none" stroke="#8a8a8a" stroke-width="1.3"/></svg>
<svg class="r" style="left:891.0px;top:326.6px" width="11.6" height="10.0" viewBox="0 0 16 16" preserveAspectRatio="none"><path d="M1 12.6 L3 8.6 H6.4 L8 12.6 Z M8 12.6 L9.6 8.6 H13 L15 12.6 Z M4.6 8.4 L6.2 4.4 H9.8 L11.4 8.4 Z" fill="#fff" stroke="#333333" stroke-width="1.2" stroke-linejoin="round"/><path d="M3 11 H5.6 M10.4 11 H13 M6.8 6.8 H9.2" stroke="#333333" stroke-width="0.9"/></svg>
<div class="t" style="left:906.2px;top:328.62px;font-size:6.96px;line-height:8.35px;color:#1e1e1e;transform:scaleX(0.983);">Komponenty</div>
<svg class="r" style="left:883.0px;top:329.4px" width="3.6" height="5.6" viewBox="0 0 6 10" preserveAspectRatio="none"><path d="M1 1 L5 5 L1 9" fill="none" stroke="#8a8a8a" stroke-width="1.3"/></svg>
<svg class="r" style="left:892.0px;top:341.0px" width="9.6" height="10.0" viewBox="0 0 16 16" preserveAspectRatio="none"><path d="M7 1 H9.4 V6 H7 Z M3.4 6 H12.8 V10 H3.4 Z M2 10 H14.2 L14.6 14.8 H1.4 Z" fill="#d6d6d6" stroke="#333333" stroke-width="1.1" stroke-linejoin="round"/><path d="M5 11 V14.6 M8 11 V14.6 M11 11 V14.6" stroke="#333333" stroke-width="0.8"/></svg>
<div class="t" style="left:906.2px;top:343.02px;font-size:6.96px;line-height:8.35px;color:#1e1e1e;transform:scaleX(0.954);">Rodzaje wykończenia</div>
<svg class="r" style="left:881.6px;top:344.8px" width="5.6" height="3.6" viewBox="0 0 10 6" preserveAspectRatio="none"><path d="M1 1 L5 5 L9 1" fill="none" stroke="#222" stroke-width="1.6"/></svg>
<svg class="r" style="left:899.8px;top:355.5px" width="8.9" height="11.0" viewBox="0 0 16 16" preserveAspectRatio="none"><rect x="1.2" y="1" width="13.6" height="14" rx="1" fill="#fff" stroke="#333333" stroke-width="1.5"/><path d="M1.2 5.6 H14.8 M1.2 10.4 H14.8 M5.8 1 V15 M10.2 1 V15" stroke="#333333" stroke-width="1.2"/></svg>
<div class="t" style="left:913.0px;top:358.02px;font-size:6.96px;line-height:8.35px;color:#1e1e1e;transform:scaleX(0.976);">Malowanie ścian</div>
<svg class="r" style="left:899.8px;top:370.1px" width="8.9" height="11.0" viewBox="0 0 16 16" preserveAspectRatio="none"><rect x="1.2" y="1" width="13.6" height="14" rx="1" fill="#fff" stroke="#333333" stroke-width="1.5"/><path d="M1.2 5.6 H14.8 M1.2 10.4 H14.8 M5.8 1 V15 M10.2 1 V15" stroke="#333333" stroke-width="1.2"/></svg>
<div class="t" style="left:913.0px;top:372.62px;font-size:6.96px;line-height:8.35px;color:#1e1e1e;transform:scaleX(0.956);">ZW-01 Elementy</div>
<svg class="r" style="left:899.8px;top:384.5px" width="8.9" height="11.0" viewBox="0 0 16 16" preserveAspectRatio="none"><rect x="1.2" y="1" width="13.6" height="14" rx="1" fill="#fff" stroke="#333333" stroke-width="1.5"/><path d="M1.2 5.6 H14.8 M1.2 10.4 H14.8 M5.8 1 V15 M10.2 1 V15" stroke="#333333" stroke-width="1.2"/></svg>
<div class="t" style="left:913.0px;top:387.02px;font-size:6.96px;line-height:8.35px;color:#1e1e1e;transform:scaleX(0.979);">ZW-02 Malowanie</div>
<svg class="r" style="left:899.8px;top:398.9px" width="8.9" height="11.0" viewBox="0 0 16 16" preserveAspectRatio="none"><rect x="1.2" y="1" width="13.6" height="14" rx="1" fill="#fff" stroke="#333333" stroke-width="1.5"/><path d="M1.2 5.6 H14.8 M1.2 10.4 H14.8 M5.8 1 V15 M10.2 1 V15" stroke="#333333" stroke-width="1.2"/></svg>
<div class="t" style="left:913.0px;top:401.42px;font-size:6.96px;line-height:8.35px;color:#1e1e1e;transform:scaleX(0.969);">ZW-03 Stolarka</div>
<svg class="r" style="left:899.8px;top:413.4px" width="8.9" height="11.0" viewBox="0 0 16 16" preserveAspectRatio="none"><rect x="1.2" y="1" width="13.6" height="14" rx="1" fill="#fff" stroke="#333333" stroke-width="1.5"/><path d="M1.2 5.6 H14.8 M1.2 10.4 H14.8 M5.8 1 V15 M10.2 1 V15" stroke="#333333" stroke-width="1.2"/></svg>
<div class="t" style="left:913.0px;top:415.92px;font-size:6.96px;line-height:8.35px;color:#1e1e1e;transform:scaleX(0.942);">ZW-04 Wszystkie</div>
<svg class="r" style="left:884.6px;top:428.6px" width="11.2" height="10.0" viewBox="0 0 16 16" preserveAspectRatio="none"><rect x="1" y="2.4" width="14" height="11.2" rx="1" fill="#fff" stroke="#333333" stroke-width="1.3"/><path d="M3.4 5 H6 M4.6 5 V11.6 M3.4 11.6 H6" stroke="#333333" stroke-width="1"/><rect x="8" y="6" width="5" height="5.6" fill="#8a8a8a" stroke="#333333" stroke-width="0.7"/></svg>
<div class="t" style="left:899.0px;top:430.62px;font-size:6.96px;line-height:8.35px;color:#1e1e1e;transform:scaleX(0.991);">Spisy zawartości projektu</div>
<svg class="r" style="left:874.8px;top:432.4px" width="5.6" height="3.6" viewBox="0 0 10 6" preserveAspectRatio="none"><path d="M1 1 L5 5 L9 1" fill="none" stroke="#222" stroke-width="1.6"/></svg>
<svg class="r" style="left:891.0px;top:441.6px" width="6.0" height="4.4" viewBox="0 0 10 6" preserveAspectRatio="none"><path d="M1 6 V2 H9 V6 M5 2 V6" fill="none" stroke="#333333" stroke-width="1.4"/></svg>
<svg class="r" style="left:957.2px;top:454.6px" width="11.4" height="10.8" viewBox="0 0 16 16" preserveAspectRatio="none"><rect x="1" y="1.4" width="12" height="10.6" rx="1" fill="#fff" stroke="#333333" stroke-width="1.3"/><rect x="8" y="8.4" width="7" height="6.4" fill="#cfe2f6" stroke="#2f7fd1" stroke-width="1.2"/><rect x="10" y="10.6" width="3" height="2.4" fill="#2f7fd1"/></svg>
<svg class="r" style="left:976.0px;top:453.8px" width="12.6" height="11.6" viewBox="0 0 16 16" preserveAspectRatio="none"><path d="M1 4.4 H5 V6.6 H13 V15 H1 Z" fill="#fff" stroke="#333333" stroke-width="1.3" stroke-linejoin="round"/><circle cx="11.6" cy="4.6" r="3.8" fill="#e4effa" stroke="#2f7fd1" stroke-width="1.1"/><path d="M11.6 2.6 V6.6 M9.6 4.6 H13.6" stroke="#2f7fd1" stroke-width="1.1"/></svg>
<svg class="r" style="left:998.0px;top:455.0px" width="8.8" height="9.4" viewBox="0 0 16 16" preserveAspectRatio="none"><path d="M1 1 L15 15 M15 1 L1 15" stroke="#e8501e" stroke-width="2"/></svg>
<div class="r " style="left:863.9px;top:474.0px;width:149.1px;height:10.2px;background:#d6d6d6;"></div>
<svg class="r" style="left:867.9px;top:477.3px;" width="3.8" height="3.8" viewBox="0 0 3.8 3.8"><path d="M0 0.95 L3.80 0.95 L1.90 3.04Z" fill="#222"/></svg>
<div class="t" style="left:877.2px;top:476.22px;font-size:6.96px;line-height:8.35px;color:#222;transform:scaleX(0.882);">Cechy</div>
<svg class="r" style="left:865.7px;top:490.4px" width="8.9" height="7.0" viewBox="0 0 16 16" preserveAspectRatio="none"><path d="M1 1.6 H5.6 V5 H15 V14.4 H1 Z" fill="#fff" stroke="#333333" stroke-width="1.4" stroke-linejoin="round"/></svg>
<div class="t" style="left:878.3px;top:490.82px;font-size:6.96px;line-height:8.35px;color:#222;transform:scaleX(0.982);">0.</div>
<div class="r " style="left:911.0px;top:487.4px;width:100.6px;height:12.2px;background:#ffffff;border:0.7px solid #9a9a9a;box-sizing:border-box;"></div>
<div class="t" style="left:913.7px;top:490.62px;font-size:6.96px;line-height:8.35px;color:#222;transform:scaleX(0.962);">Poziom 0</div>
<div class="r " style="left:865.0px;top:501.6px;width:146.6px;height:13.8px;background:#e1e1e1;border:0.7px solid #b4b4b4;box-sizing:border-box;"></div>
<div class="t" style="left:919.4px;top:505.42px;font-size:6.96px;line-height:8.35px;color:#222;transform:scaleX(0.934);">Ustawienia...</div>
<div class="r " style="left:88.2px;top:507.4px;width:775.2px;height:14.0px;background:#f0f0f0;"></div>
<div class="r " style="left:0.0px;top:521.4px;width:1013.0px;height:0.6px;background:#e4e4e4;"></div>
<div class="r " style="left:0.0px;top:522.0px;width:1013.0px;height:8.0px;background:#f1f1f1;"></div>
<svg class="r" style="left:90.6px;top:509.0px" width="11.2" height="11.2" viewBox="0 0 16 16"><circle cx="9" cy="7" r="5.4" fill="none" stroke="#333333" stroke-width="1.2"/><path d="M5 11 L1 15" stroke="#333333" stroke-width="1.5"/><path d="M1 3.6 V7.6 H5" fill="none" stroke="#333333" stroke-width="1.2" stroke-width="1.1"/></svg>
<svg class="r" style="left:106.0px;top:509.4px" width="10.4" height="10.4" viewBox="0 0 16 16"><circle cx="7" cy="7" r="5.4" fill="none" stroke="#bdbdbd" stroke-width="1.2"/><path d="M11 11 L15 15" stroke="#bdbdbd" stroke-width="1.5"/><path d="M15 3.6 V7.6 H11" fill="none" stroke="#bdbdbd" stroke-width="1.1"/></svg>
<svg class="r" style="left:121.0px;top:509.4px" width="10.4" height="10.4" viewBox="0 0 16 16"><circle cx="6.6" cy="6.6" r="5.4" fill="none" stroke="#333333" stroke-width="1.2"/><path d="M10.6 10.6 L15 15" stroke="#333333" stroke-width="1.5"/><path d="M6.6 4 V9.2 M4 6.6 H9.2" stroke="#333333" stroke-width="1.1"/></svg>
<div class="r " style="left:134.7px;top:508.6px;width:0.7px;height:12.0px;background:#c4c4c4;"></div>
<svg class="r" style="left:139.7px;top:509.2px" width="10.9" height="10.9" viewBox="0 0 16 16"><circle cx="6.6" cy="6.6" r="5.4" fill="none" stroke="#333333" stroke-width="1.2"/><path d="M10.6 10.6 L15 15" stroke="#333333" stroke-width="1.5"/><path d="M4 5.6 V4 H5.6 M7.6 4 H9.2 V5.6 M9.2 7.6 V9.2 H7.6 M5.6 9.2 H4 V7.6" fill="none" stroke="#333333" stroke-width="1.2" stroke-width="0.9"/></svg>
<div class="t" style="left:173.6px;top:511.46px;font-size:6.74px;line-height:8.09px;color:#222;transform:scaleX(1.008);">82%</div>
<svg class="r" style="left:206.7px;top:512.7px;" width="4.0" height="4.0" viewBox="0 0 4.0 4.0"><path d="M0.90 0 L3.20 2.00 L0.90 4.00Z" fill="#111"/></svg>
<div class="r " style="left:214.2px;top:508.6px;width:0.7px;height:12.0px;background:#c4c4c4;"></div>
<svg class="r" style="left:219.6px;top:510.4px" width="8.4" height="8.4" viewBox="0 0 16 16"><path d="M2 9 L8 3 L12 6 L6 12 Z" fill="none" stroke="#333333" stroke-width="1.2"/><path d="M9 13.6 C12 14 14.6 12 14 8.6 M12.4 9.6 L14 8 L15.4 10" fill="none" stroke="#333333" stroke-width="1.2" stroke-width="1"/></svg>
<div class="t" style="left:251.8px;top:511.46px;font-size:6.74px;line-height:8.09px;color:#222;transform:scaleX(0.942);">0,00°</div>
<svg class="r" style="left:285.8px;top:512.7px;" width="4.0" height="4.0" viewBox="0 0 4.0 4.0"><path d="M0.90 0 L3.20 2.00 L0.90 4.00Z" fill="#111"/></svg>
<div class="r " style="left:293.0px;top:508.6px;width:0.7px;height:12.0px;background:#c4c4c4;"></div>
<svg class="r" style="left:298.6px;top:509.9px" width="9.4" height="9.4" viewBox="0 0 16 16"><rect x="1" y="4.6" width="14" height="7" rx="1" fill="none" stroke="#333333" stroke-width="1.2"/><path d="M4 11.6 V9.4 M6.6 11.6 V9.4 M9.4 11.6 V9.4 M12 11.6 V9.4" stroke="#333333" stroke-width="0.9"/></svg>
<div class="t" style="left:332.2px;top:511.46px;font-size:6.74px;line-height:8.09px;color:#222;transform:scaleX(1.037);">1:50</div>
<svg class="r" style="left:365.0px;top:512.7px;" width="4.0" height="4.0" viewBox="0 0 4.0 4.0"><path d="M0.90 0 L3.20 2.00 L0.90 4.00Z" fill="#111"/></svg>
<div class="r " style="left:372.2px;top:508.6px;width:0.7px;height:12.0px;background:#c4c4c4;"></div>
<svg class="r" style="left:377.2px;top:509.8px" width="9.6" height="9.6" viewBox="0 0 16 16"><path d="M3 4.4 L6 2 H15 L12 4.4 Z M2 8 L5 5.6 M3 4.4 H12 L15 2 M2 8 H11 L14 5.6 M1 11.6 L4 9.2 M1 11.6 H10 L13 9.2 M1 14.6 H10 L13 12.4" fill="none" stroke="#333333" stroke-width="1.2" stroke-width="1"/></svg>
<div class="t" style="left:392.6px;top:511.46px;font-size:6.74px;line-height:8.09px;color:#222;transform:scaleX(1.011);">Warstwy domy...</div>
<svg class="r" style="left:444.0px;top:512.7px;" width="4.0" height="4.0" viewBox="0 0 4.0 4.0"><path d="M0.90 0 L3.20 2.00 L0.90 4.00Z" fill="#111"/></svg>
<div class="r " style="left:451.3px;top:508.6px;width:0.7px;height:12.0px;background:#c4c4c4;"></div>
<svg class="r" style="left:456.8px;top:509.8px" width="9.6" height="9.6" viewBox="0 0 16 16"><rect x="1" y="2.6" width="14" height="10.8" fill="#4a4a4a" stroke="#333333" stroke-width="1"/><path d="M2 9 L5 6 L7 9 L10 6 L12 9 L14 7" fill="none" stroke="#e0e0e0" stroke-width="0.9"/><path d="M2 4.8 H14" stroke="#cfcfcf" stroke-width="0.8" stroke-dasharray="1.4 1"/></svg>
<div class="t" style="left:479.9px;top:511.46px;font-size:6.74px;line-height:8.09px;color:#222;transform:scaleX(1.012);">Cały model</div>
<svg class="r" style="left:522.8px;top:512.7px;" width="4.0" height="4.0" viewBox="0 0 4.0 4.0"><path d="M0.90 0 L3.20 2.00 L0.90 4.00Z" fill="#111"/></svg>
<div class="r " style="left:530.9px;top:508.6px;width:0.7px;height:12.0px;background:#c4c4c4;"></div>
<svg class="r" style="left:536.4px;top:510.8px" width="7.6" height="7.6" viewBox="0 0 16 16"><path d="M4 1.4 V8 C4 12.6 12 12.6 12 8 V1.4 M8 11.4 V15" fill="none" stroke="#333333" stroke-width="1.2" stroke-width="1.5"/></svg>
<div class="t" style="left:551.8px;top:511.46px;font-size:6.74px;line-height:8.09px;color:#222;transform:scaleX(1.016);">Pióra domyślne</div>
<svg class="r" style="left:602.3px;top:512.7px;" width="4.0" height="4.0" viewBox="0 0 4.0 4.0"><path d="M0.90 0 L3.20 2.00 L0.90 4.00Z" fill="#111"/></svg>
<div class="r " style="left:610.6px;top:508.6px;width:0.7px;height:12.0px;background:#c4c4c4;"></div>
<svg class="r" style="left:615.0px;top:509.9px" width="9.4" height="9.4" viewBox="0 0 16 16"><rect x="1" y="3" width="14" height="10" rx="1" fill="none" stroke="#333333" stroke-width="1.2"/><rect x="4" y="6" width="8" height="4" fill="none" stroke="#333333" stroke-width="1.2" stroke-width="1"/></svg>
<div class="t" style="left:631.0px;top:511.46px;font-size:6.74px;line-height:8.09px;color:#222;transform:scaleX(1.025);">Repr. domyślna</div>
<svg class="r" style="left:681.5px;top:512.7px;" width="4.0" height="4.0" viewBox="0 0 4.0 4.0"><path d="M0.90 0 L3.20 2.00 L0.90 4.00Z" fill="#111"/></svg>
<div class="r " style="left:689.2px;top:508.6px;width:0.7px;height:12.0px;background:#c4c4c4;"></div>
<svg class="r" style="left:694.1px;top:510.1px" width="9.1" height="9.1" viewBox="0 0 16 16"><path d="M1.4 3.6 H7 V9 H1.4 Z" fill="none" stroke="#333333" stroke-width="1.2" stroke-width="1.1"/><path d="M8.4 5.6 H10.6 V8" fill="none" stroke="#333333" stroke-width="1.2" stroke-width="1"/><rect x="7.4" y="8" width="7" height="6.6" fill="#e0e0e0" stroke="#333333" stroke-width="1.1"/><path d="M9 10 H13 M9 12.4 H13" stroke="#333333" stroke-width="0.8"/></svg>
<div class="t" style="left:711.5px;top:511.46px;font-size:6.74px;line-height:8.09px;color:#222;transform:scaleX(1.003);">Brak zastąpień</div>
<svg class="r" style="left:760.4px;top:512.7px;" width="4.0" height="4.0" viewBox="0 0 4.0 4.0"><path d="M0.90 0 L3.20 2.00 L0.90 4.00Z" fill="#111"/></svg>
<div class="r " style="left:767.9px;top:508.6px;width:0.7px;height:12.0px;background:#c4c4c4;"></div>
<svg class="r" style="left:773.6px;top:509.8px" width="9.6" height="9.6" viewBox="0 0 16 16"><path d="M1.6 13.6 L8 3 L11.4 13.6 Z" fill="#d6d6d6" stroke="#333333" stroke-width="1.1" stroke-linejoin="round"/><path d="M7.4 9 L14.4 13.6 H5" fill="none" stroke="#333333" stroke-width="1.2" stroke-width="1.1"/></svg>
<div class="t" style="left:790.9px;top:511.46px;font-size:6.74px;line-height:8.09px;color:#222;transform:scaleX(1.025);">Etap domyślny</div>
<svg class="r" style="left:839.5px;top:512.7px;" width="4.0" height="4.0" viewBox="0 0 4.0 4.0"><path d="M0.90 0 L3.20 2.00 L0.90 4.00Z" fill="#111"/></svg>
<div class="r " style="left:911.4px;top:522.0px;width:86.0px;height:8.0px;background:#f7f7f7;"></div>
<div class="r " style="left:911.2px;top:522.0px;width:0.6px;height:8.0px;background:#dcdcdc;"></div>
<div class="r " style="left:997.4px;top:522.0px;width:0.6px;height:8.0px;background:#dcdcdc;"></div>
<svg class="r" style="left:897.2px;top:523.2px" width="11.2" height="11.2" viewBox="0 0 16 16"><rect x="1" y="1" width="14" height="12" rx="1.6" fill="none" stroke="#444" stroke-width="1.6"/><rect x="4" y="5" width="14" height="12" rx="1.6" fill="#f0f0f0" stroke="#444" stroke-width="1.6"/></svg>
<div class="t" style="left:922.0px;top:523.68px;font-size:9.2px;line-height:11.04px;color:#ababab;transform:scaleX(0.908);">GRAPHISOFT ID</div>
</body></html>
